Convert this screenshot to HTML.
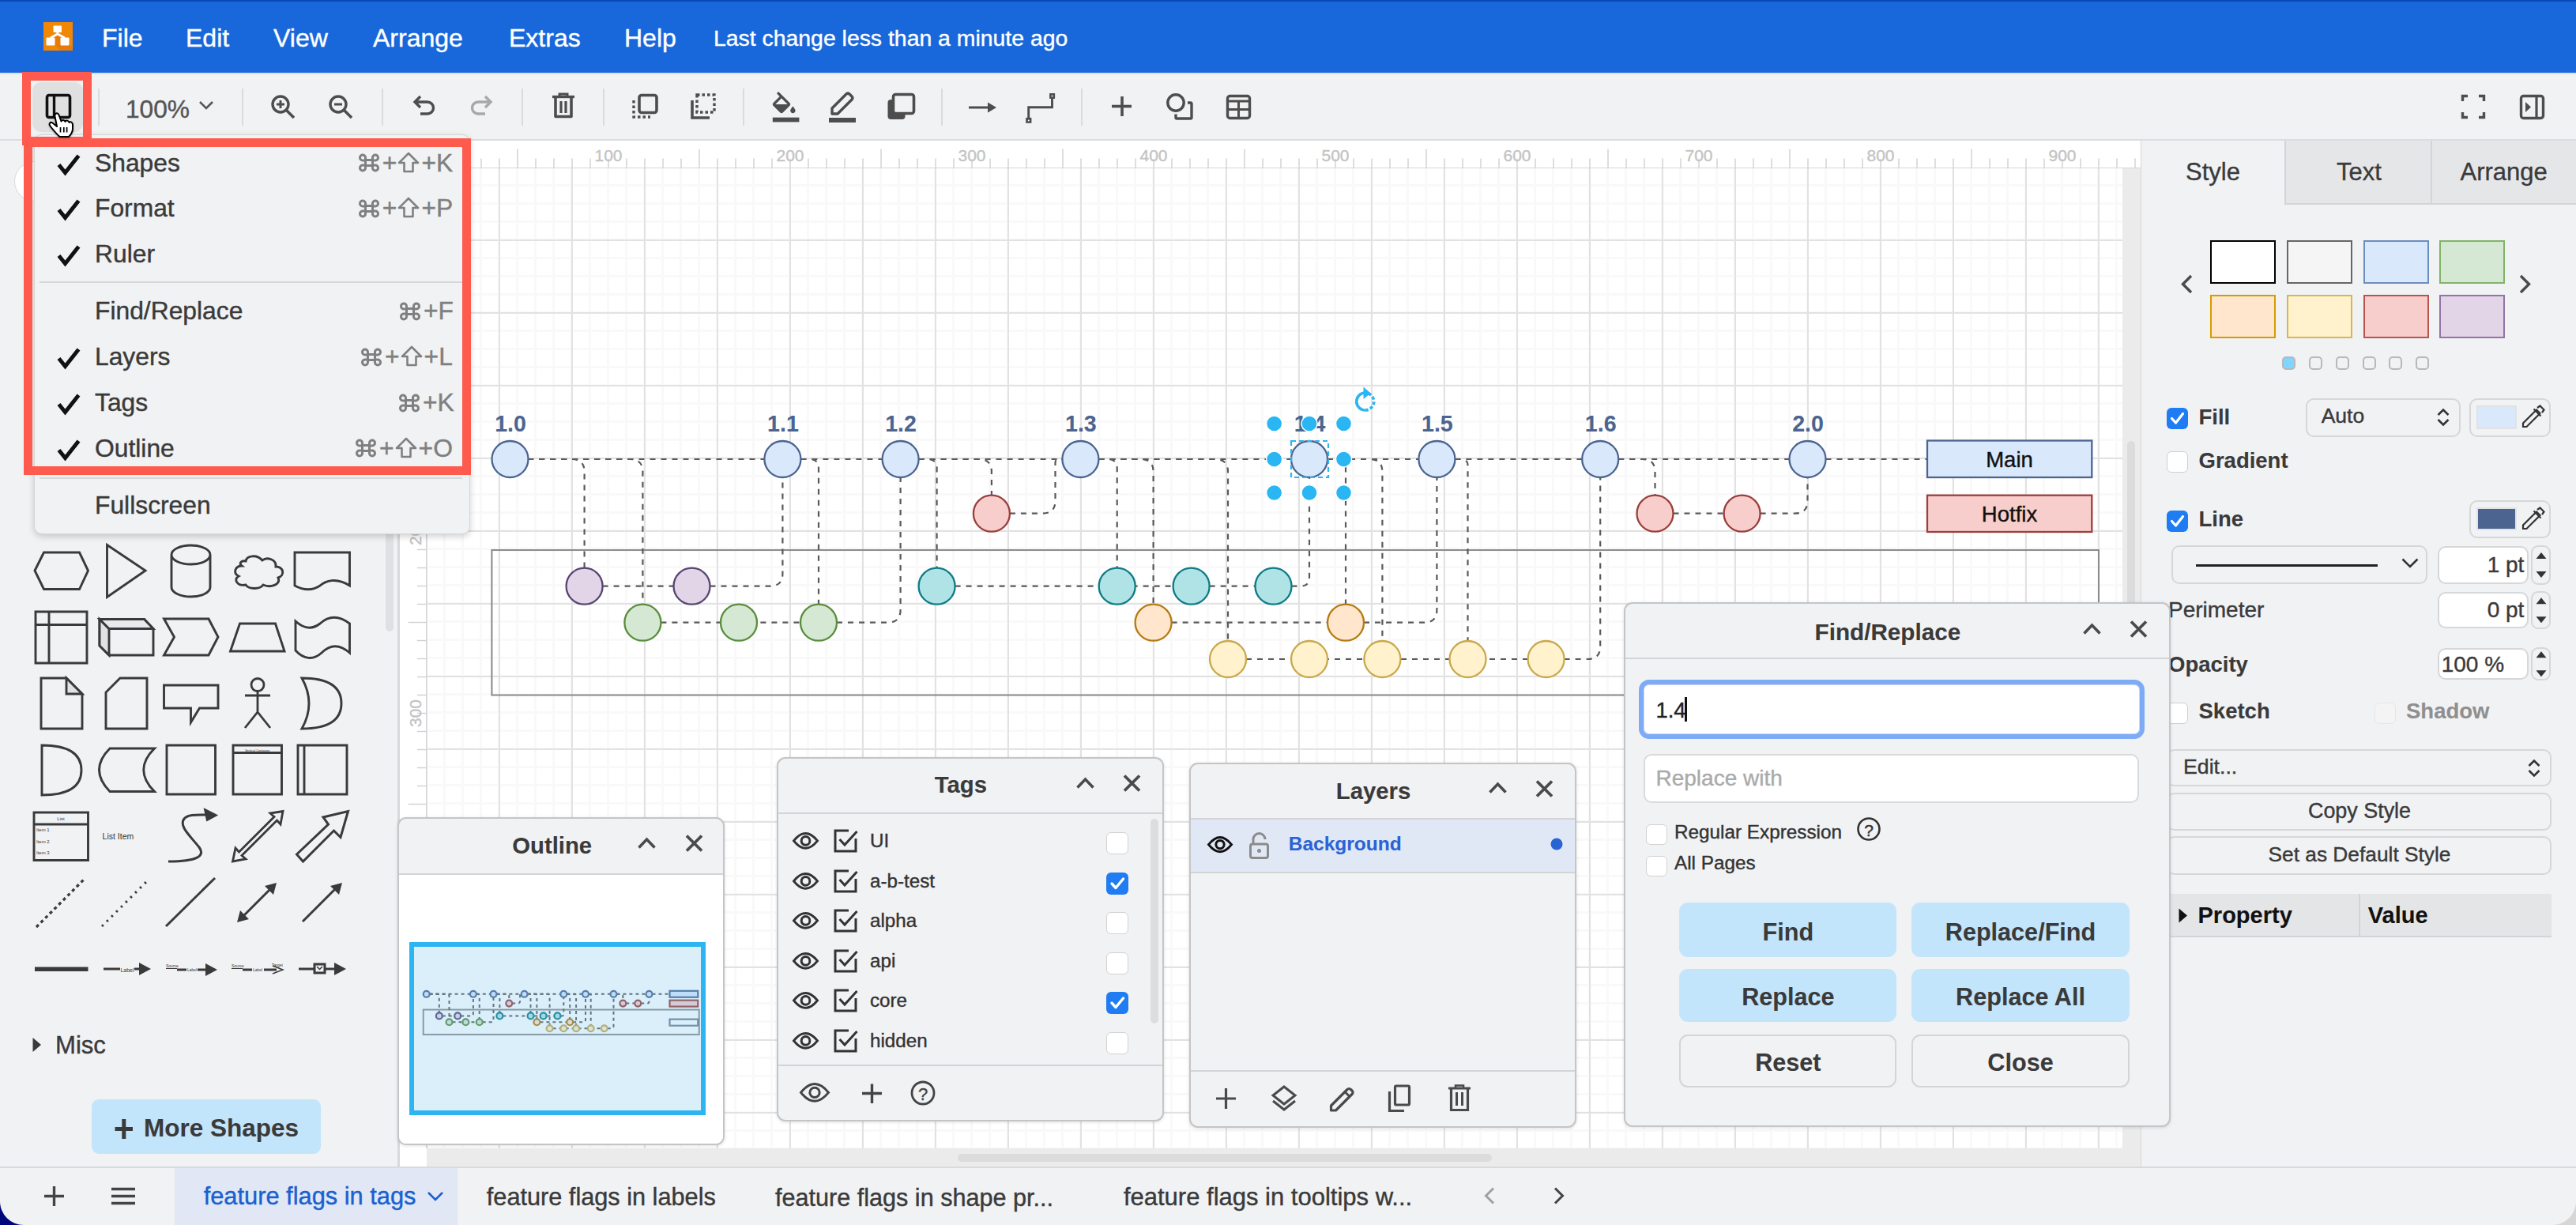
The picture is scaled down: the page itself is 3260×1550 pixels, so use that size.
<!DOCTYPE html>
<html><head><meta charset="utf-8">
<style>
html,body{margin:0;padding:0;}
body{width:3260px;height:1550px;position:relative;overflow:hidden;background:#f1f2f4;font-family:"Liberation Sans", sans-serif;}
.t{position:absolute;line-height:1;white-space:nowrap;-webkit-text-stroke:0.4px currentColor;}
.t.bd{-webkit-text-stroke:0.1px currentColor;}
.b{position:absolute;box-sizing:border-box;}
svg{position:absolute;overflow:visible;}
</style></head><body>
<div class="b" style="left:0.0px;top:0.0px;width:3260.0px;height:92.0px;background:#1868db;"></div>
<div class="b" style="left:0.0px;top:0.0px;width:3260.0px;height:2.0px;background:#0a48b8;"></div>
<svg style="left:55px;top:28px" width="37" height="36" viewBox="0 0 37 36">
<rect x="0" y="0" width="37" height="36" fill="#f08705"/>
<path d="M18 13 L37 32 L37 36 L22 36 L8 22 Z" fill="#e2700c" opacity="0.55"/>
<rect x="12.5" y="4.5" width="10.5" height="8.5" fill="#fff" rx="1"/>
<rect x="3.5" y="19.5" width="11" height="10" fill="#fff" rx="1"/>
<rect x="21.5" y="19.5" width="11" height="10" fill="#fff" rx="1"/>
<path d="M17.8 12 V15 L9 20 M17.8 15 L27 20" stroke="#fff" stroke-width="2.8" fill="none"/>
</svg>
<div class="t" style="left:129.0px;top:31.9px;font-size:32px;color:#fff;font-weight:normal;">File</div>
<div class="t" style="left:235.0px;top:31.9px;font-size:32px;color:#fff;font-weight:normal;">Edit</div>
<div class="t" style="left:346.0px;top:31.9px;font-size:32px;color:#fff;font-weight:normal;">View</div>
<div class="t" style="left:472.0px;top:31.9px;font-size:32px;color:#fff;font-weight:normal;">Arrange</div>
<div class="t" style="left:644.0px;top:31.9px;font-size:32px;color:#fff;font-weight:normal;">Extras</div>
<div class="t" style="left:790.0px;top:31.9px;font-size:32px;color:#fff;font-weight:normal;">Help</div>
<div class="t" style="left:903.0px;top:34.0px;font-size:28.4px;color:#fff;font-weight:normal;">Last change less than a minute ago</div>
<div class="b" style="left:0.0px;top:92.0px;width:3260.0px;height:85.0px;background:#f1f2f4;"></div>
<div class="b" style="left:0.0px;top:92.0px;width:3260.0px;height:2.0px;background:#dfdedb;"></div>
<div class="b" style="left:0.0px;top:176.0px;width:3260.0px;height:2.0px;background:#dcdde0;"></div>
<div class="b" style="left:0.0px;top:178.0px;width:505.0px;height:1298.0px;background:#f1f2f4;"></div>
<div class="b" style="left:503.0px;top:178.0px;width:2.0px;height:1298.0px;background:#dcdde0;"></div>
<div class="b" style="left:505.0px;top:178.0px;width:2204.0px;height:1298.0px;background:#fff;"></div>
<div class="b" style="left:2709.0px;top:178.0px;width:551.0px;height:1298.0px;background:#f1f2f4;"></div>
<div class="b" style="left:2708.0px;top:178.0px;width:2.0px;height:1298.0px;background:#d6d7da;"></div>
<div class="b" style="left:0.0px;top:1476.0px;width:3260.0px;height:74.0px;background:#f1f2f4;"></div>
<div class="b" style="left:0.0px;top:1476.0px;width:3260.0px;height:2.0px;background:#d8dadd;"></div>
<div class="b" style="left:41.0px;top:104.0px;width:64.0px;height:63.0px;background:#e0e0e0;border-radius:11px;"></div>
<svg style="left:55px;top:115px" width="40" height="40" viewBox="0 0 40 40"><rect x="4.5" y="5.5" width="29" height="28" rx="2.5" fill="none" stroke="#111" stroke-width="3.6"/><line x1="13.5" y1="6" x2="13.5" y2="33" stroke="#111" stroke-width="3.4"/></svg>
<div class="b" style="left:124.0px;top:112.0px;width:2.0px;height:47.0px;background:#dadbdd;"></div>
<div class="b" style="left:306.0px;top:112.0px;width:2.0px;height:47.0px;background:#dadbdd;"></div>
<div class="b" style="left:483.0px;top:112.0px;width:2.0px;height:47.0px;background:#dadbdd;"></div>
<div class="b" style="left:660.0px;top:112.0px;width:2.0px;height:47.0px;background:#dadbdd;"></div>
<div class="b" style="left:763.0px;top:112.0px;width:2.0px;height:47.0px;background:#dadbdd;"></div>
<div class="b" style="left:940.0px;top:112.0px;width:2.0px;height:47.0px;background:#dadbdd;"></div>
<div class="b" style="left:1191.0px;top:112.0px;width:2.0px;height:47.0px;background:#dadbdd;"></div>
<div class="b" style="left:1368.0px;top:112.0px;width:2.0px;height:47.0px;background:#dadbdd;"></div>
<div class="t" style="left:159.0px;top:123.2px;font-size:31.7px;color:#555;font-weight:normal;">100%</div>
<svg style="left:248px;top:124px" width="26" height="20" viewBox="0 0 26 20"><path d="M5 5 L13 13 L21 5" fill="none" stroke="#555" stroke-width="2.6"/></svg>
<svg style="left:341px;top:118px" width="34" height="34" viewBox="0 0 34 34"><circle cx="14" cy="14" r="10" fill="none" stroke="#4d4d4d" stroke-width="3.4"/><line x1="21.5" y1="21.5" x2="31" y2="31" stroke="#4d4d4d" stroke-width="3.6"/><line x1="9" y1="14" x2="19" y2="14" stroke="#4d4d4d" stroke-width="3"/><line x1="14" y1="9" x2="14" y2="19" stroke="#4d4d4d" stroke-width="3"/></svg>
<svg style="left:414px;top:118px" width="34" height="34" viewBox="0 0 34 34"><circle cx="14" cy="14" r="10" fill="none" stroke="#4d4d4d" stroke-width="3.4"/><line x1="21.5" y1="21.5" x2="31" y2="31" stroke="#4d4d4d" stroke-width="3.6"/><line x1="9" y1="14" x2="19" y2="14" stroke="#4d4d4d" stroke-width="3"/></svg>
<svg style="left:520px;top:118px" width="34" height="34" viewBox="0 0 34 34"><path d="M6 11 H21 A7.5 7.5 0 0 1 21 26 H12" fill="none" stroke="#4d4d4d" stroke-width="3.4"/><path d="M12 4 L5 11 L12 18" fill="none" stroke="#4d4d4d" stroke-width="3.4"/></svg>
<svg style="left:592px;top:118px" width="34" height="34" viewBox="0 0 34 34"><g transform="translate(34,0) scale(-1,1)"><path d="M6 11 H21 A7.5 7.5 0 0 1 21 26 H12" fill="none" stroke="#a8a8a8" stroke-width="3.4"/><path d="M12 4 L5 11 L12 18" fill="none" stroke="#a8a8a8" stroke-width="3.4"/></g></svg>
<svg style="left:696px;top:116px" width="34" height="36" viewBox="0 0 34 36"><path d="M3 6.5 H31" stroke="#4d4d4d" stroke-width="3.4"/><path d="M12 6 V3 H22 V6" fill="none" stroke="#4d4d4d" stroke-width="3"/><path d="M7 8 V31.5 H27 V8" fill="none" stroke="#4d4d4d" stroke-width="3.6" stroke-linejoin="round"/><line x1="14" y1="12" x2="14" y2="27" stroke="#4d4d4d" stroke-width="3.2"/><line x1="20" y1="12" x2="20" y2="27" stroke="#4d4d4d" stroke-width="3.2"/></svg>
<svg style="left:798px;top:117px" width="36" height="36" viewBox="0 0 36 36"><rect x="11" y="3.5" width="22" height="22" rx="3" fill="none" stroke="#4d4d4d" stroke-width="3.6"/><path d="M4 10 V31 H25" fill="none" stroke="#4d4d4d" stroke-width="3.4" stroke-dasharray="3.5 3"/></svg>
<svg style="left:872px;top:117px" width="36" height="36" viewBox="0 0 36 36"><path d="M10 3 H32 V25 H10 Z" fill="none" stroke="#4d4d4d" stroke-width="3.4" stroke-dasharray="3.5 3"/><path d="M4 10 V32 H26" fill="none" stroke="#4d4d4d" stroke-width="3.6"/></svg>
<svg style="left:973px;top:116px" width="40" height="40" viewBox="0 0 40 40"><g transform="scale(1.6)"><path d="M16.56 8.94L7.62 0 6.21 1.41l2.38 2.38-5.15 5.15c-.59.59-.59 1.54 0 2.12l5.5 5.5c.29.29.68.44 1.06.44s.77-.15 1.06-.44l5.5-5.5c.59-.58.59-1.53 0-2.12zM5.21 10L10 5.21 14.79 10H5.21zM19 11.5s-2 2.17-2 3.5c0 1.1.9 2 2 2s2-.9 2-2c0-1.33-2-3.5-2-3.5z" fill="#4d4d4d"/><rect x="3" y="20.4" width="21" height="3.6" fill="#4d4d4d"/></g></svg>
<svg style="left:1047px;top:113px" width="40" height="42" viewBox="0 0 40 42"><path d="M6 30 L6 24 L24 6 A3 3 0 0 1 28 6 L31 9 A3 3 0 0 1 31 13 L13 31 L6 31 Z" fill="none" stroke="#4d4d4d" stroke-width="3.4" stroke-linejoin="round"/><rect x="2" y="36" width="34" height="6" fill="#4d4d4d"/></svg>
<svg style="left:1120px;top:116px" width="40" height="40" viewBox="0 0 40 40"><rect x="3.5" y="10" width="22" height="25" rx="4" fill="#4d4d4d"/><rect x="10.5" y="3.5" width="26" height="24" rx="3" fill="#f1f2f4" stroke="#4d4d4d" stroke-width="3.6"/></svg>
<svg style="left:1224px;top:126px" width="40" height="20" viewBox="0 0 40 20"><line x1="2" y1="10" x2="28" y2="10" stroke="#4d4d4d" stroke-width="3"/><path d="M26 3.5 L37 10 L26 16.5 Z" fill="#4d4d4d"/></svg>
<svg style="left:1290px;top:110px" width="50" height="50" viewBox="0 0 50 50"><path d="M11.7 39 V25.7 H41.5 V14" fill="none" stroke="#4d4d4d" stroke-width="2.9"/><rect x="8.2" y="38.9" width="7.2" height="6.9" fill="#4d4d4d"/><rect x="38.1" y="8" width="7" height="6.9" fill="#4d4d4d"/><circle cx="11.8" cy="42.4" r="1" fill="#fff"/><circle cx="41.6" cy="11.5" r="1" fill="#fff"/></svg>
<svg style="left:1404px;top:119px" width="32" height="32" viewBox="0 0 32 32"><line x1="16" y1="3" x2="16" y2="28" stroke="#4d4d4d" stroke-width="3.6"/><line x1="3" y1="15.5" x2="28" y2="15.5" stroke="#4d4d4d" stroke-width="3.6"/></svg>
<svg style="left:1474px;top:116px" width="40" height="40" viewBox="0 0 40 40"><circle cx="14" cy="14" r="10.2" fill="none" stroke="#4d4d4d" stroke-width="3.4"/><path d="M14 28.5 V32.5 A1.5 1.5 0 0 0 15.5 34 H32.5 A1.5 1.5 0 0 0 34 32.5 V15.5 A1.5 1.5 0 0 0 32.5 14 H29" fill="none" stroke="#4d4d4d" stroke-width="3.4"/></svg>
<svg style="left:1550px;top:118px" width="36" height="36" viewBox="0 0 36 36"><rect x="3.5" y="3.5" width="28" height="28" rx="3" fill="none" stroke="#4d4d4d" stroke-width="3.4"/><line x1="3.5" y1="10" x2="31.5" y2="10" stroke="#4d4d4d" stroke-width="3"/><line x1="3.5" y1="20.5" x2="31.5" y2="20.5" stroke="#4d4d4d" stroke-width="3"/><line x1="17.5" y1="10" x2="17.5" y2="31" stroke="#4d4d4d" stroke-width="3"/></svg>
<svg style="left:3112px;top:117px" width="36" height="36" viewBox="0 0 36 36"><path d="M4.5 11 V4.5 H11 M25 4.5 H31.5 V11 M31.5 25 V31.5 H25 M11 31.5 H4.5 V25" fill="none" stroke="#4d4d4d" stroke-width="3.4"/></svg>
<svg style="left:3186px;top:117px" width="36" height="36" viewBox="0 0 36 36"><rect x="4.5" y="4.5" width="28" height="28" rx="3" fill="none" stroke="#4d4d4d" stroke-width="3.4"/><line x1="24" y1="5" x2="24" y2="32" stroke="#4d4d4d" stroke-width="3.2"/><path d="M10 12 L17 18.5 L10 25 Z" fill="#4d4d4d"/></svg>
<div class="b" style="left:540px;top:212px;width:2146px;height:1241px;background-color:#fff;background-image:linear-gradient(to right,#e2e2e2 0,#e2e2e2 2px,transparent 2px),linear-gradient(to bottom,#e2e2e2 0,#e2e2e2 2px,transparent 2px),linear-gradient(to right,#f9f9f9 0,#f9f9f9 3px,transparent 3px),linear-gradient(to bottom,#f9f9f9 0,#f9f9f9 3px,transparent 3px);background-size:92px 92px,92px 92px,23px 23px,23px 23px;background-position:-1px -1px,-1px -1px,-2px -2px,-2px -2px;"></div>
<div class="b" style="left:505.0px;top:178.0px;width:2204.0px;height:34.0px;background:#fff;"></div>
<div class="b" style="left:505.0px;top:212.0px;width:2204.0px;height:1.2px;background:#d3d5da;"></div>
<div class="b" style="left:505.0px;top:213.0px;width:34.0px;height:1240.0px;background:#fff;"></div>
<div class="b" style="left:503.0px;top:178.0px;width:2.5px;height:1298.0px;background:#d8d9dc;"></div>
<div class="b" style="left:538.8px;top:213.0px;width:1.2px;height:1240.0px;background:#d3d5da;"></div>
<svg style="left:0;top:0" width="3260" height="1550"><g stroke="#d0d0d0" stroke-width="1.4"><line x1="540" y1="188.5" x2="540" y2="212" /><line x1="563" y1="200.5" x2="563" y2="212" /><line x1="586" y1="200.5" x2="586" y2="212" /><line x1="609" y1="200.5" x2="609" y2="212" /><line x1="632" y1="200.5" x2="632" y2="212" /><line x1="655" y1="188.5" x2="655" y2="212" /><line x1="678" y1="200.5" x2="678" y2="212" /><line x1="701" y1="200.5" x2="701" y2="212" /><line x1="724" y1="200.5" x2="724" y2="212" /><line x1="747" y1="200.5" x2="747" y2="212" /><line x1="770" y1="201" x2="770" y2="212" /><line x1="793" y1="200.5" x2="793" y2="212" /><line x1="816" y1="200.5" x2="816" y2="212" /><line x1="839" y1="200.5" x2="839" y2="212" /><line x1="862" y1="200.5" x2="862" y2="212" /><line x1="885" y1="188.5" x2="885" y2="212" /><line x1="908" y1="200.5" x2="908" y2="212" /><line x1="931" y1="200.5" x2="931" y2="212" /><line x1="954" y1="200.5" x2="954" y2="212" /><line x1="977" y1="200.5" x2="977" y2="212" /><line x1="1000" y1="201" x2="1000" y2="212" /><line x1="1023" y1="200.5" x2="1023" y2="212" /><line x1="1046" y1="200.5" x2="1046" y2="212" /><line x1="1069" y1="200.5" x2="1069" y2="212" /><line x1="1092" y1="200.5" x2="1092" y2="212" /><line x1="1115" y1="188.5" x2="1115" y2="212" /><line x1="1138" y1="200.5" x2="1138" y2="212" /><line x1="1161" y1="200.5" x2="1161" y2="212" /><line x1="1184" y1="200.5" x2="1184" y2="212" /><line x1="1207" y1="200.5" x2="1207" y2="212" /><line x1="1230" y1="201" x2="1230" y2="212" /><line x1="1253" y1="200.5" x2="1253" y2="212" /><line x1="1276" y1="200.5" x2="1276" y2="212" /><line x1="1299" y1="200.5" x2="1299" y2="212" /><line x1="1322" y1="200.5" x2="1322" y2="212" /><line x1="1345" y1="188.5" x2="1345" y2="212" /><line x1="1368" y1="200.5" x2="1368" y2="212" /><line x1="1391" y1="200.5" x2="1391" y2="212" /><line x1="1414" y1="200.5" x2="1414" y2="212" /><line x1="1437" y1="200.5" x2="1437" y2="212" /><line x1="1460" y1="201" x2="1460" y2="212" /><line x1="1483" y1="200.5" x2="1483" y2="212" /><line x1="1506" y1="200.5" x2="1506" y2="212" /><line x1="1529" y1="200.5" x2="1529" y2="212" /><line x1="1552" y1="200.5" x2="1552" y2="212" /><line x1="1575" y1="188.5" x2="1575" y2="212" /><line x1="1598" y1="200.5" x2="1598" y2="212" /><line x1="1621" y1="200.5" x2="1621" y2="212" /><line x1="1644" y1="200.5" x2="1644" y2="212" /><line x1="1667" y1="200.5" x2="1667" y2="212" /><line x1="1690" y1="201" x2="1690" y2="212" /><line x1="1713" y1="200.5" x2="1713" y2="212" /><line x1="1736" y1="200.5" x2="1736" y2="212" /><line x1="1759" y1="200.5" x2="1759" y2="212" /><line x1="1782" y1="200.5" x2="1782" y2="212" /><line x1="1805" y1="188.5" x2="1805" y2="212" /><line x1="1828" y1="200.5" x2="1828" y2="212" /><line x1="1851" y1="200.5" x2="1851" y2="212" /><line x1="1874" y1="200.5" x2="1874" y2="212" /><line x1="1897" y1="200.5" x2="1897" y2="212" /><line x1="1920" y1="201" x2="1920" y2="212" /><line x1="1943" y1="200.5" x2="1943" y2="212" /><line x1="1966" y1="200.5" x2="1966" y2="212" /><line x1="1989" y1="200.5" x2="1989" y2="212" /><line x1="2012" y1="200.5" x2="2012" y2="212" /><line x1="2035" y1="188.5" x2="2035" y2="212" /><line x1="2058" y1="200.5" x2="2058" y2="212" /><line x1="2081" y1="200.5" x2="2081" y2="212" /><line x1="2104" y1="200.5" x2="2104" y2="212" /><line x1="2127" y1="200.5" x2="2127" y2="212" /><line x1="2150" y1="201" x2="2150" y2="212" /><line x1="2173" y1="200.5" x2="2173" y2="212" /><line x1="2196" y1="200.5" x2="2196" y2="212" /><line x1="2219" y1="200.5" x2="2219" y2="212" /><line x1="2242" y1="200.5" x2="2242" y2="212" /><line x1="2265" y1="188.5" x2="2265" y2="212" /><line x1="2288" y1="200.5" x2="2288" y2="212" /><line x1="2311" y1="200.5" x2="2311" y2="212" /><line x1="2334" y1="200.5" x2="2334" y2="212" /><line x1="2357" y1="200.5" x2="2357" y2="212" /><line x1="2380" y1="201" x2="2380" y2="212" /><line x1="2403" y1="200.5" x2="2403" y2="212" /><line x1="2426" y1="200.5" x2="2426" y2="212" /><line x1="2449" y1="200.5" x2="2449" y2="212" /><line x1="2472" y1="200.5" x2="2472" y2="212" /><line x1="2495" y1="188.5" x2="2495" y2="212" /><line x1="2518" y1="200.5" x2="2518" y2="212" /><line x1="2541" y1="200.5" x2="2541" y2="212" /><line x1="2564" y1="200.5" x2="2564" y2="212" /><line x1="2587" y1="200.5" x2="2587" y2="212" /><line x1="2610" y1="201" x2="2610" y2="212" /><line x1="2633" y1="200.5" x2="2633" y2="212" /><line x1="2656" y1="200.5" x2="2656" y2="212" /><line x1="2679" y1="200.5" x2="2679" y2="212" /><line x1="2702" y1="200.5" x2="2702" y2="212" /><line x1="516.5" y1="212.5" x2="539" y2="212.5" /><line x1="528" y1="235.5" x2="539" y2="235.5" /><line x1="528" y1="258.5" x2="539" y2="258.5" /><line x1="528" y1="281.5" x2="539" y2="281.5" /><line x1="528" y1="304.5" x2="539" y2="304.5" /><line x1="516.5" y1="327.5" x2="539" y2="327.5" /><line x1="528" y1="350.5" x2="539" y2="350.5" /><line x1="528" y1="373.5" x2="539" y2="373.5" /><line x1="528" y1="396.5" x2="539" y2="396.5" /><line x1="528" y1="419.5" x2="539" y2="419.5" /><line x1="528" y1="442.5" x2="539" y2="442.5" /><line x1="528" y1="465.5" x2="539" y2="465.5" /><line x1="528" y1="488.5" x2="539" y2="488.5" /><line x1="528" y1="511.5" x2="539" y2="511.5" /><line x1="528" y1="534.5" x2="539" y2="534.5" /><line x1="516.5" y1="557.5" x2="539" y2="557.5" /><line x1="528" y1="580.5" x2="539" y2="580.5" /><line x1="528" y1="603.5" x2="539" y2="603.5" /><line x1="528" y1="626.5" x2="539" y2="626.5" /><line x1="528" y1="649.5" x2="539" y2="649.5" /><line x1="528" y1="672.5" x2="539" y2="672.5" /><line x1="528" y1="695.5" x2="539" y2="695.5" /><line x1="528" y1="718.5" x2="539" y2="718.5" /><line x1="528" y1="741.5" x2="539" y2="741.5" /><line x1="528" y1="764.5" x2="539" y2="764.5" /><line x1="516.5" y1="787.5" x2="539" y2="787.5" /><line x1="528" y1="810.5" x2="539" y2="810.5" /><line x1="528" y1="833.5" x2="539" y2="833.5" /><line x1="528" y1="856.5" x2="539" y2="856.5" /><line x1="528" y1="879.5" x2="539" y2="879.5" /><line x1="528" y1="902.5" x2="539" y2="902.5" /><line x1="528" y1="925.5" x2="539" y2="925.5" /><line x1="528" y1="948.5" x2="539" y2="948.5" /><line x1="528" y1="971.5" x2="539" y2="971.5" /><line x1="528" y1="994.5" x2="539" y2="994.5" /><line x1="516.5" y1="1017.5" x2="539" y2="1017.5" /><line x1="528" y1="1040.5" x2="539" y2="1040.5" /><line x1="528" y1="1063.5" x2="539" y2="1063.5" /><line x1="528" y1="1086.5" x2="539" y2="1086.5" /><line x1="528" y1="1109.5" x2="539" y2="1109.5" /><line x1="528" y1="1132.5" x2="539" y2="1132.5" /><line x1="528" y1="1155.5" x2="539" y2="1155.5" /><line x1="528" y1="1178.5" x2="539" y2="1178.5" /><line x1="528" y1="1201.5" x2="539" y2="1201.5" /><line x1="528" y1="1224.5" x2="539" y2="1224.5" /><line x1="516.5" y1="1247.5" x2="539" y2="1247.5" /><line x1="528" y1="1270.5" x2="539" y2="1270.5" /><line x1="528" y1="1293.5" x2="539" y2="1293.5" /><line x1="528" y1="1316.5" x2="539" y2="1316.5" /><line x1="528" y1="1339.5" x2="539" y2="1339.5" /><line x1="528" y1="1362.5" x2="539" y2="1362.5" /><line x1="528" y1="1385.5" x2="539" y2="1385.5" /><line x1="528" y1="1408.5" x2="539" y2="1408.5" /><line x1="528" y1="1431.5" x2="539" y2="1431.5" /></g></svg>
<div class="t" style="left:-230.0px;width:2000px;text-align:center;top:185.7px;font-size:21px;color:#c4c4c4;font-weight:normal;">100</div><div class="t" style="left:0.0px;width:2000px;text-align:center;top:185.7px;font-size:21px;color:#c4c4c4;font-weight:normal;">200</div><div class="t" style="left:230.0px;width:2000px;text-align:center;top:185.7px;font-size:21px;color:#c4c4c4;font-weight:normal;">300</div><div class="t" style="left:460.0px;width:2000px;text-align:center;top:185.7px;font-size:21px;color:#c4c4c4;font-weight:normal;">400</div><div class="t" style="left:690.0px;width:2000px;text-align:center;top:185.7px;font-size:21px;color:#c4c4c4;font-weight:normal;">500</div><div class="t" style="left:920.0px;width:2000px;text-align:center;top:185.7px;font-size:21px;color:#c4c4c4;font-weight:normal;">600</div><div class="t" style="left:1150.0px;width:2000px;text-align:center;top:185.7px;font-size:21px;color:#c4c4c4;font-weight:normal;">700</div><div class="t" style="left:1380.0px;width:2000px;text-align:center;top:185.7px;font-size:21px;color:#c4c4c4;font-weight:normal;">800</div><div class="t" style="left:1610.0px;width:2000px;text-align:center;top:185.7px;font-size:21px;color:#c4c4c4;font-weight:normal;">900</div><div class="t" style="left:484.5px;top:432.0px;width:80px;height:21px;text-align:center;font-size:21px;color:#c4c4c4;transform:rotate(-90deg);">100</div><div class="t" style="left:484.5px;top:662.0px;width:80px;height:21px;text-align:center;font-size:21px;color:#c4c4c4;transform:rotate(-90deg);">200</div><div class="t" style="left:484.5px;top:892.0px;width:80px;height:21px;text-align:center;font-size:21px;color:#c4c4c4;transform:rotate(-90deg);">300</div><div class="t" style="left:484.5px;top:1122.0px;width:80px;height:21px;text-align:center;font-size:21px;color:#c4c4c4;transform:rotate(-90deg);">400</div><div class="t" style="left:484.5px;top:1352.0px;width:80px;height:21px;text-align:center;font-size:21px;color:#c4c4c4;transform:rotate(-90deg);">500</div>
<div class="b" style="left:2686.0px;top:213.0px;width:23.0px;height:1263.0px;background:#ebebeb;"></div>
<div class="b" style="left:2692.0px;top:558.0px;width:10.0px;height:842.0px;background:#dcdcdc;border-radius:5px;"></div>
<div class="b" style="left:540.0px;top:1453.0px;width:2146.0px;height:23.0px;background:#ebebeb;"></div>
<div class="b" style="left:1212.0px;top:1459.7px;width:676.0px;height:10.3px;background:#dcdcdc;border-radius:5px;"></div>
<svg style="left:0;top:0" width="3260" height="1550"><rect x="622.40" y="696.00" width="2033.60" height="183.50" fill="none" stroke="#8c8c8c" stroke-width="2.07"/><path d="M668.5,581.0 L967.4,581.0" fill="none" stroke="#595959" stroke-width="2.2" stroke-dasharray="7 7"/><path d="M1013.4,581.0 L1116.6,581.0" fill="none" stroke="#595959" stroke-width="2.2" stroke-dasharray="7 7"/><path d="M1162.6,581.0 L1344.4,581.0" fill="none" stroke="#595959" stroke-width="2.2" stroke-dasharray="7 7"/><path d="M1390.4,581.0 L1634.0,581.0" fill="none" stroke="#595959" stroke-width="2.2" stroke-dasharray="7 7"/><path d="M1680.0,581.0 L1795.4,581.0" fill="none" stroke="#595959" stroke-width="2.2" stroke-dasharray="7 7"/><path d="M1841.4,581.0 L2002.2,581.0" fill="none" stroke="#595959" stroke-width="2.2" stroke-dasharray="7 7"/><path d="M2048.2,581.0 L2264.5,581.0" fill="none" stroke="#595959" stroke-width="2.2" stroke-dasharray="7 7"/><path d="M2310.5,581.0 L2439.0,581.0" fill="none" stroke="#595959" stroke-width="2.2" stroke-dasharray="7 7"/><path d="M668.0,581.0 L723.6,581.0 Q739.6,581.0 739.6,597.0 L739.6,718.7" fill="none" stroke="#595959" stroke-width="2.2" stroke-dasharray="7 7"/><path d="M668.0,581.0 L797.4,581.0 Q813.4,581.0 813.4,597.0 L813.4,764.7" fill="none" stroke="#595959" stroke-width="2.2" stroke-dasharray="7 7"/><path d="M762.6,741.7 L852.5,741.7" fill="none" stroke="#595959" stroke-width="2.2" stroke-dasharray="7 7"/><path d="M898.5,741.7 L974.4,741.7 Q990.4,741.7 990.4,725.7 L990.4,604.0" fill="none" stroke="#595959" stroke-width="2.2" stroke-dasharray="7 7"/><path d="M1013.4,581.0 L1024.7,581.0 Q1036.0,581.0 1036.0,592.3 L1036.0,764.7" fill="none" stroke="#595959" stroke-width="2.2" stroke-dasharray="7 7"/><path d="M836.4,787.7 L1013.0,787.7" fill="none" stroke="#595959" stroke-width="2.2" stroke-dasharray="7 7"/><path d="M1059.0,787.7 L1123.6,787.7 Q1139.6,787.7 1139.6,771.7 L1139.6,604.0" fill="none" stroke="#595959" stroke-width="2.2" stroke-dasharray="7 7"/><path d="M1162.6,581.0 L1174.1,581.0 Q1185.6,581.0 1185.6,592.5 L1185.6,718.7" fill="none" stroke="#595959" stroke-width="2.2" stroke-dasharray="7 7"/><path d="M1162.6,581.0 L1238.9,581.0 Q1254.9,581.0 1254.9,597.0 L1254.9,626.7" fill="none" stroke="#595959" stroke-width="2.2" stroke-dasharray="7 7"/><path d="M1277.9,649.7 L1319.5,649.7 Q1335.5,649.7 1335.5,633.7 L1335.5,585.5 Q1335.5,581.0 1340.0,581.0 L1344.4,581.0" fill="none" stroke="#595959" stroke-width="2.2" stroke-dasharray="7 7"/><path d="M1390.4,581.0 L1402.1,581.0 Q1413.7,581.0 1413.7,592.6 L1413.7,718.7" fill="none" stroke="#595959" stroke-width="2.2" stroke-dasharray="7 7"/><path d="M1390.4,581.0 L1443.6,581.0 Q1459.6,581.0 1459.6,597.0 L1459.6,764.7" fill="none" stroke="#595959" stroke-width="2.2" stroke-dasharray="7 7"/><path d="M1390.4,581.0 L1538.0,581.0 Q1554.0,581.0 1554.0,597.0 L1554.0,811.0" fill="none" stroke="#595959" stroke-width="2.2" stroke-dasharray="7 7"/><path d="M1208.6,741.7 L1588.5,741.7" fill="none" stroke="#595959" stroke-width="2.2" stroke-dasharray="7 7"/><path d="M1634.5,741.7 L1645.8,741.7 Q1657.0,741.7 1657.0,730.5 L1657.0,604.0" fill="none" stroke="#595959" stroke-width="2.2" stroke-dasharray="7 7"/><path d="M1680.0,581.0 L1691.5,581.0 Q1703.0,581.0 1703.0,592.5 L1703.0,764.7" fill="none" stroke="#595959" stroke-width="2.2" stroke-dasharray="7 7"/><path d="M1482.6,787.7 L1680.0,787.7" fill="none" stroke="#595959" stroke-width="2.2" stroke-dasharray="7 7"/><path d="M1726.0,787.7 L1802.4,787.7 Q1818.4,787.7 1818.4,771.7 L1818.4,604.0" fill="none" stroke="#595959" stroke-width="2.2" stroke-dasharray="7 7"/><path d="M1680.0,581.0 L1733.4,581.0 Q1749.4,581.0 1749.4,597.0 L1749.4,811.0" fill="none" stroke="#595959" stroke-width="2.2" stroke-dasharray="7 7"/><path d="M1577.0,834.0 L1933.6,834.0" fill="none" stroke="#595959" stroke-width="2.2" stroke-dasharray="7 7"/><path d="M1841.4,581.0 L1849.5,581.0 Q1857.5,581.0 1857.5,589.0 L1857.5,811.0" fill="none" stroke="#595959" stroke-width="2.2" stroke-dasharray="7 7"/><path d="M1979.6,834.0 L2009.2,834.0 Q2025.2,834.0 2025.2,818.0 L2025.2,604.0" fill="none" stroke="#595959" stroke-width="2.2" stroke-dasharray="7 7"/><path d="M2048.2,581.0 L2078.5,581.0 Q2094.5,581.0 2094.5,597.0 L2094.5,626.7" fill="none" stroke="#595959" stroke-width="2.2" stroke-dasharray="7 7"/><path d="M2117.5,649.7 L2181.6,649.7" fill="none" stroke="#595959" stroke-width="2.2" stroke-dasharray="7 7"/><path d="M2227.6,649.7 L2271.5,649.7 Q2287.5,649.7 2287.5,633.7 L2287.5,604.0" fill="none" stroke="#595959" stroke-width="2.2" stroke-dasharray="7 7"/><circle cx="645.50" cy="581.00" r="23.00" fill="#dae8fc" stroke="#4b6590" stroke-width="2.3"/><circle cx="990.40" cy="581.00" r="23.00" fill="#dae8fc" stroke="#4b6590" stroke-width="2.3"/><circle cx="1139.60" cy="581.00" r="23.00" fill="#dae8fc" stroke="#4b6590" stroke-width="2.3"/><circle cx="1367.40" cy="581.00" r="23.00" fill="#dae8fc" stroke="#4b6590" stroke-width="2.3"/><circle cx="1657.00" cy="581.00" r="23.00" fill="#dae8fc" stroke="#4b6590" stroke-width="2.3"/><circle cx="1818.40" cy="581.00" r="23.00" fill="#dae8fc" stroke="#4b6590" stroke-width="2.3"/><circle cx="2025.20" cy="581.00" r="23.00" fill="#dae8fc" stroke="#4b6590" stroke-width="2.3"/><circle cx="2287.50" cy="581.00" r="23.00" fill="#dae8fc" stroke="#4b6590" stroke-width="2.3"/><circle cx="739.60" cy="741.70" r="23.00" fill="#e1d5e7" stroke="#574572" stroke-width="2.3"/><circle cx="875.50" cy="741.70" r="23.00" fill="#e1d5e7" stroke="#574572" stroke-width="2.3"/><circle cx="813.40" cy="787.70" r="23.00" fill="#d5e8d4" stroke="#5a8d3b" stroke-width="2.3"/><circle cx="935.00" cy="787.70" r="23.00" fill="#d5e8d4" stroke="#5a8d3b" stroke-width="2.3"/><circle cx="1036.00" cy="787.70" r="23.00" fill="#d5e8d4" stroke="#5a8d3b" stroke-width="2.3"/><circle cx="1254.90" cy="649.70" r="23.00" fill="#f8cecc" stroke="#9a3f3c" stroke-width="2.3"/><circle cx="2094.50" cy="649.70" r="23.00" fill="#f8cecc" stroke="#9a3f3c" stroke-width="2.3"/><circle cx="2204.60" cy="649.70" r="23.00" fill="#f8cecc" stroke="#9a3f3c" stroke-width="2.3"/><circle cx="1185.60" cy="741.70" r="23.00" fill="#b0e3e6" stroke="#0e7c85" stroke-width="2.3"/><circle cx="1413.70" cy="741.70" r="23.00" fill="#b0e3e6" stroke="#0e7c85" stroke-width="2.3"/><circle cx="1507.60" cy="741.70" r="23.00" fill="#b0e3e6" stroke="#0e7c85" stroke-width="2.3"/><circle cx="1611.50" cy="741.70" r="23.00" fill="#b0e3e6" stroke="#0e7c85" stroke-width="2.3"/><circle cx="1459.60" cy="787.70" r="23.00" fill="#ffe6cc" stroke="#b67a10" stroke-width="2.3"/><circle cx="1703.00" cy="787.70" r="23.00" fill="#ffe6cc" stroke="#b67a10" stroke-width="2.3"/><circle cx="1554.00" cy="834.00" r="23.00" fill="#fff2cc" stroke="#c9a94c" stroke-width="2.3"/><circle cx="1657.00" cy="834.00" r="23.00" fill="#fff2cc" stroke="#c9a94c" stroke-width="2.3"/><circle cx="1749.40" cy="834.00" r="23.00" fill="#fff2cc" stroke="#c9a94c" stroke-width="2.3"/><circle cx="1857.50" cy="834.00" r="23.00" fill="#fff2cc" stroke="#c9a94c" stroke-width="2.3"/><circle cx="1956.60" cy="834.00" r="23.00" fill="#fff2cc" stroke="#c9a94c" stroke-width="2.3"/><rect x="2439.00" y="557.50" width="208.30" height="46.50" fill="#dae8fc" stroke="#4b6590" stroke-width="2.3"/><rect x="2439.00" y="626.70" width="208.30" height="46.30" fill="#f8cecc" stroke="#9a3f3c" stroke-width="2.3"/></svg>
<div class="t bd" style="left:-354.0px;width:2000px;text-align:center;top:521.8px;font-size:28.6px;color:#4b6590;font-weight:bold;">1.0</div>
<div class="t bd" style="left:-9.1px;width:2000px;text-align:center;top:521.8px;font-size:28.6px;color:#4b6590;font-weight:bold;">1.1</div>
<div class="t bd" style="left:140.1px;width:2000px;text-align:center;top:521.8px;font-size:28.6px;color:#4b6590;font-weight:bold;">1.2</div>
<div class="t bd" style="left:367.9px;width:2000px;text-align:center;top:521.8px;font-size:28.6px;color:#4b6590;font-weight:bold;">1.3</div>
<div class="t bd" style="left:657.5px;width:2000px;text-align:center;top:521.8px;font-size:28.6px;color:#4b6590;font-weight:bold;">1.4</div>
<div class="t bd" style="left:818.9px;width:2000px;text-align:center;top:521.8px;font-size:28.6px;color:#4b6590;font-weight:bold;">1.5</div>
<div class="t bd" style="left:1025.7px;width:2000px;text-align:center;top:521.8px;font-size:28.6px;color:#4b6590;font-weight:bold;">1.6</div>
<div class="t bd" style="left:1288.0px;width:2000px;text-align:center;top:521.8px;font-size:28.6px;color:#4b6590;font-weight:bold;">2.0</div>
<div class="t" style="left:1543.0px;width:2000px;text-align:center;top:567.7px;font-size:27.5px;color:#111;font-weight:normal;">Main</div>
<div class="t" style="left:1543.0px;width:2000px;text-align:center;top:636.7px;font-size:27.5px;color:#111;font-weight:normal;">Hotfix</div>
<svg style="left:0;top:0" width="3260" height="1550"><rect x="1634" y="558" width="47" height="46" fill="none" stroke="#29b6f2" stroke-width="2.2" stroke-dasharray="6 4"/><circle cx="1612.6" cy="536" r="10" fill="#29b6f2" stroke="#fff" stroke-width="1.4"/><circle cx="1612.6" cy="581" r="10" fill="#29b6f2" stroke="#fff" stroke-width="1.4"/><circle cx="1612.6" cy="623.5" r="10" fill="#29b6f2" stroke="#fff" stroke-width="1.4"/><circle cx="1657" cy="536" r="10" fill="#29b6f2" stroke="#fff" stroke-width="1.4"/><circle cx="1657" cy="623.5" r="10" fill="#29b6f2" stroke="#fff" stroke-width="1.4"/><circle cx="1700.5" cy="536" r="10" fill="#29b6f2" stroke="#fff" stroke-width="1.4"/><circle cx="1700.5" cy="581" r="10" fill="#29b6f2" stroke="#fff" stroke-width="1.4"/><circle cx="1700.5" cy="623.5" r="10" fill="#29b6f2" stroke="#fff" stroke-width="1.4"/><path d="M1727.7 497 A11 11 0 0 0 1727.7 519" fill="none" stroke="#29b6f2" stroke-width="3.6"/><path d="M1727.7 519 A11 11 0 0 0 1738.7 508 A11 11 0 0 0 1732 498" fill="none" stroke="#29b6f2" stroke-width="3.6" stroke-dasharray="4 2.5"/><path d="M1725.5 489.5 L1734.5 497.5 L1725.5 505 Z" fill="#29b6f2"/></svg>
<div class="b" style="left:18.0px;top:204.0px;width:472.0px;height:51.0px;background:#fff;border:1.5px solid #d9d9d9;border-radius:26px;"></div>
<div class="b" style="left:488.0px;top:650.0px;width:10.0px;height:149.0px;background:#dfe0e2;border-radius:5px;"></div>
<svg style="left:0;top:0" width="520" height="1550"><path d="M55.5,699 L100.5,699 L111.5,722 L100.5,745.5 L55.5,745.5 L44,722 Z" fill="none" stroke="#3a3a3a" stroke-width="2.9" stroke-linejoin="miter" /><path d="M135.5,689.5 L184,722 L135.5,755.5 Z" fill="none" stroke="#3a3a3a" stroke-width="2.9" stroke-linejoin="miter" /><path d="M217,702 L217,743 A24.5,12 0 0 0 266,743 L266,702 A24.5,12 0 0 0 217,702 A24.5,12 0 0 0 266,702" fill="none" stroke="#3a3a3a" stroke-width="2.9" stroke-linejoin="miter" /><path d="M306,716 C298,716 294,725 302,729 C295,733 300,742 311,740 C315,746 329,746 333,740 C342,744 356,740 352,731 C361,728 359,717 349,717 C350,708 338,704 332,709 C325,701 312,703 311,710 C305,709 302,713 306,716 Z" fill="none" stroke="#3a3a3a" stroke-width="2.9" stroke-linejoin="miter" /><path d="M373,699 L442.5,699 L442.5,741 C425,730 412,735 405,741 C396,747 386,748 373,741 Z" fill="none" stroke="#3a3a3a" stroke-width="2.9" stroke-linejoin="miter" /><path d="M45,774 H110 V839 H45 Z M62,774 V839 M45,790.5 H110" fill="none" stroke="#3a3a3a" stroke-width="2.9" stroke-linejoin="miter" /><path d="M126,783.5 L182.5,783.5 L194,795.5 L194,829 L138,829 L126,817 Z" fill="none" stroke="#3a3a3a" stroke-width="2.9" stroke-linejoin="miter" /><path d="M126,783.5 L138,795.5 L138,829 L126,817 Z" fill="#dfe3e6" stroke="#3a3a3a" stroke-width="2.9"/><path d="M126,783.5 L182.5,783.5 L194,795.5 L138,795.5 Z" fill="#e8ebed" stroke="#3a3a3a" stroke-width="2.9"/><path d="M207.5,783 L264,783 L276,806 L264,829 L207.5,829 L220.5,806 Z" fill="none" stroke="#3a3a3a" stroke-width="2.9" stroke-linejoin="miter" /><path d="M303.5,789 L348.5,789 L360,824 L291.5,824 Z" fill="none" stroke="#3a3a3a" stroke-width="2.9" stroke-linejoin="miter" /><path d="M374,786 C386,797 396,796 405,789 C416,779 428,778 442.5,789 L442.5,826 C430,815 418,815 407,826 C396,836 384,834 374,823 Z" fill="none" stroke="#3a3a3a" stroke-width="2.9" stroke-linejoin="miter" /><path d="M52,858 L84,858 L104,878 L104,922 L52,922 Z" fill="none" stroke="#3a3a3a" stroke-width="2.9" stroke-linejoin="miter" /><path d="M84,858 L84,878 L104,878 Z" fill="#dfe3e6" stroke="#3a3a3a" stroke-width="2.9"/><path d="M152,858 L186,858 L186,922 L134,922 L134,876 Z" fill="none" stroke="#3a3a3a" stroke-width="2.9" stroke-linejoin="miter" /><path d="M207.5,867 L276,867 L276,896 L252.5,896 L241.5,914 L241.5,896 L207.5,896 Z" fill="none" stroke="#3a3a3a" stroke-width="2.9" stroke-linejoin="miter" /><g stroke="#3a3a3a" stroke-width="2.8" fill="none"><circle cx="326" cy="866.5" r="8"/><path d="M326,874.5 V901 M310,880 H342 M310,921 L326,901 L342,921"/></g><path d="M382,858 Q432,858 432,890 Q432,922 382,922 Q400,890 382,858 Z" fill="none" stroke="#3a3a3a" stroke-width="2.9" stroke-linejoin="miter" /><path d="M53,943 Q103,943 103,974.5 Q103,1006 53,1006 Z" fill="none" stroke="#3a3a3a" stroke-width="2.9" stroke-linejoin="miter" /><path d="M139,947 L195.5,947 Q168,974 195.5,1001.5 L139,1001.5 Q112,974 139,947 Z" fill="none" stroke="#3a3a3a" stroke-width="2.9" stroke-linejoin="miter" /><path d="M211,943 H272.5 V1005 H211 Z" fill="none" stroke="#3a3a3a" stroke-width="2.9" stroke-linejoin="miter" /><path d="M295,943 H356.5 V1005 H295 Z M295,952.5 H356.5" fill="none" stroke="#3a3a3a" stroke-width="2.9" stroke-linejoin="miter" /><text x="325.7" y="950.5" font-size="4" text-anchor="middle" fill="#333" font-family="Liberation Sans">Vertical Container</text><path d="M377,943 H439 V1005 H377 Z M385,943 V1005" fill="none" stroke="#3a3a3a" stroke-width="2.9" stroke-linejoin="miter" /><path d="M43,1028 H111.5 V1088.5 H43 Z M43,1043 H111.5" fill="none" stroke="#3a3a3a" stroke-width="2.9" stroke-linejoin="miter" /><g font-family="Liberation Sans" fill="#333" font-size="6"><text x="77" y="1038" text-anchor="middle">List</text><text x="46" y="1052">Item 1</text><text x="46" y="1066.5">Item 2</text><text x="46" y="1081">Item 3</text></g><text x="129.6" y="1062" font-size="10.5" fill="#333" font-family="Liberation Sans">List Item</text><path d="M213,1090 C250,1090 260,1083 252,1072 C240,1057 226,1045 233,1036 C238,1030 250,1031 263,1031" fill="none" stroke="#3a3a3a" stroke-width="3" stroke-linejoin="miter" /><path d="M259,1024 L274,1031.5 L262,1038 Z" fill="#3a3a3a" stroke="#3a3a3a" stroke-width="2"/><path d="M294.5,1090 L298,1073 L302.5,1078 L347,1033.5 L342,1029 L358,1026.5 L355,1043 L350.5,1038 L306,1082.5 L311,1087 Z" fill="none" stroke="#3a3a3a" stroke-width="2.8" stroke-linejoin="miter" /><path d="M375.5,1081 L383.5,1090 L422.5,1051 L431,1059.5 L440.5,1026.5 L409,1034 L415.5,1043 Z" fill="none" stroke="#3a3a3a" stroke-width="3" stroke-linejoin="miter" /><line x1="46" y1="1173" x2="107" y2="1112" stroke="#3a3a3a" stroke-width="3.3" stroke-dasharray="4 4"/><line x1="129" y1="1172" x2="186" y2="1115" stroke="#3a3a3a" stroke-width="3" stroke-dasharray="2.5 6"/><line x1="210" y1="1172" x2="272" y2="1111" stroke="#3a3a3a" stroke-width="3"/><line x1="306" y1="1161" x2="344" y2="1123" stroke="#3a3a3a" stroke-width="3"/><path d="M300,1167 L304,1152 L315,1163 Z M350,1117 L346,1132 L335,1121 Z" fill="#3a3a3a"/><line x1="383" y1="1166" x2="426" y2="1123" stroke="#3a3a3a" stroke-width="3"/><path d="M433,1117 L429,1132 L418,1121 Z" fill="#3a3a3a"/><rect x="44" y="1223.5" width="67.5" height="5.5" fill="#3a3a3a"/><g stroke="#3a3a3a" stroke-width="3"><line x1="131" y1="1226" x2="152" y2="1226"/><line x1="170" y1="1226" x2="184" y2="1226"/></g><path d="M176,1218 L191,1226 L176,1234 Z" fill="#3a3a3a"/><text x="161" y="1229.5" font-size="7" text-anchor="middle" fill="#333" font-family="Liberation Sans">Label</text><g stroke="#3a3a3a" stroke-width="3"><line x1="224" y1="1227" x2="236" y2="1227"/><line x1="250" y1="1227" x2="268" y2="1227"/></g><line x1="210" y1="1225.5" x2="224" y2="1225.5" stroke="#3a3a3a" stroke-width="1"/><path d="M260,1219 L275,1227 L260,1235 Z" fill="#3a3a3a"/><text x="210" y="1224" font-size="5" fill="#333" font-family="Liberation Sans">Source</text><text x="243" y="1229" font-size="5" text-anchor="middle" fill="#333" font-family="Liberation Sans">Label</text><g stroke="#3a3a3a" stroke-width="3"><line x1="307" y1="1227" x2="319" y2="1227"/><line x1="334" y1="1227" x2="350" y2="1227"/></g><line x1="293" y1="1225.5" x2="307" y2="1225.5" stroke="#3a3a3a" stroke-width="1"/><path d="M345,1222 L358,1227 L345,1232" fill="none" stroke="#3a3a3a" stroke-width="1.5"/><text x="293" y="1224" font-size="5" fill="#333" font-family="Liberation Sans">Source</text><text x="326" y="1229" font-size="5" text-anchor="middle" fill="#333" font-family="Liberation Sans">Label</text><text x="344" y="1223" font-size="5" fill="#333" font-family="Liberation Sans">Target</text><g stroke="#3a3a3a" stroke-width="3"><line x1="378" y1="1226" x2="398" y2="1226"/><line x1="411" y1="1226" x2="426" y2="1226"/><rect x="398" y="1220" width="13" height="11" fill="none"/></g><path d="M401,1223 L404.5,1226.5 L408,1223" fill="none" stroke="#3a3a3a" stroke-width="1.5"/><path d="M423,1218 L438,1226 L423,1234 Z" fill="#3a3a3a"/></svg>
<svg style="left:38px;top:1310px" width="18" height="24"><path d="M3.5 3 L14 12 L3.5 21 Z" fill="#3a3a3a"/></svg>
<div class="t" style="left:70.0px;top:1306.7px;font-size:31.1px;color:#3a3a3a;font-weight:normal;">Misc</div>
<div class="b" style="left:116.0px;top:1391.0px;width:290.0px;height:68.5px;background:#c3e5fc;border-radius:9px;"></div>
<svg style="left:140px;top:1410px" width="34" height="36"><path d="M16.8 6 V31 M5.5 18.5 H28" stroke="#3a3a3a" stroke-width="5"/></svg>
<div class="t bd" style="left:182.0px;top:1412.3px;font-size:31.5px;color:#3a3a3a;font-weight:bold;">More Shapes</div>
<div class="b" style="left:2892.0px;top:178.0px;width:368.0px;height:80.5px;background:#e5e6e8;border-bottom:2px solid #d3d4d7;"></div>
<div class="b" style="left:2891.0px;top:178.0px;width:2.0px;height:80.5px;background:#d3d4d7;"></div>
<div class="b" style="left:3076.0px;top:178.0px;width:2.0px;height:80.5px;background:#d3d4d7;"></div>
<div class="t" style="left:2766.0px;top:201.8px;font-size:31px;color:#3a3a3a;font-weight:normal;-webkit-text-stroke:0.35px currentColor;">Style</div>
<div class="t" style="left:2957.0px;top:201.8px;font-size:31px;color:#3a3a3a;font-weight:normal;-webkit-text-stroke:0.35px currentColor;">Text</div>
<div class="t" style="left:3113.5px;top:201.8px;font-size:31px;color:#3a3a3a;font-weight:normal;-webkit-text-stroke:0.35px currentColor;">Arrange</div>
<div class="b" style="left:2797.0px;top:304.0px;width:83.0px;height:54.6px;background:#ffffff;border:2.4px solid #000000;"></div>
<div class="b" style="left:2894.0px;top:304.0px;width:83.0px;height:54.6px;background:#f5f5f5;border:2.4px solid #666666;"></div>
<div class="b" style="left:2991.0px;top:304.0px;width:83.0px;height:54.6px;background:#dae8fc;border:2.4px solid #6c8ebf;"></div>
<div class="b" style="left:3087.0px;top:304.0px;width:83.0px;height:54.6px;background:#d5e8d4;border:2.4px solid #82b366;"></div>
<div class="b" style="left:2797.0px;top:373.4px;width:83.0px;height:54.6px;background:#ffe6cc;border:2.4px solid #d79b00;"></div>
<div class="b" style="left:2894.0px;top:373.4px;width:83.0px;height:54.6px;background:#fff2cc;border:2.4px solid #d6b656;"></div>
<div class="b" style="left:2991.0px;top:373.4px;width:83.0px;height:54.6px;background:#f8cecc;border:2.4px solid #b85450;"></div>
<div class="b" style="left:3087.0px;top:373.4px;width:83.0px;height:54.6px;background:#e1d5e7;border:2.4px solid #9673a6;"></div>
<svg style="left:2755px;top:345px" width="24" height="30"><path d="M18 4 L7.5 14.5 L18 25" fill="none" stroke="#4a4a4a" stroke-width="3.4"/></svg>
<svg style="left:3184px;top:345px" width="24" height="30"><path d="M6 4 L16.5 14.5 L6 25" fill="none" stroke="#4a4a4a" stroke-width="3.4"/></svg>
<div class="b" style="left:2888.1px;top:451.0px;width:17.0px;height:17.0px;background:#80d4ff;border:2px solid #b8b8b8;border-radius:5px;"></div>
<div class="b" style="left:2922.3px;top:451.0px;width:17.0px;height:17.0px;background:transparent;border:2px solid #b8b8b8;border-radius:5px;"></div>
<div class="b" style="left:2956.3px;top:451.0px;width:17.0px;height:17.0px;background:transparent;border:2px solid #b8b8b8;border-radius:5px;"></div>
<div class="b" style="left:2990.0px;top:451.0px;width:17.0px;height:17.0px;background:transparent;border:2px solid #b8b8b8;border-radius:5px;"></div>
<div class="b" style="left:3023.4px;top:451.0px;width:17.0px;height:17.0px;background:transparent;border:2px solid #b8b8b8;border-radius:5px;"></div>
<div class="b" style="left:3057.3px;top:451.0px;width:17.0px;height:17.0px;background:transparent;border:2px solid #b8b8b8;border-radius:5px;"></div>
<div class="b" style="left:2742.0px;top:516.0px;width:27.0px;height:27.0px;background:#1f7cf2;border-radius:6px;"></div><svg style="left:2742px;top:516px" width="27" height="27" viewBox="0 0 27 27"><path d="M6.5 13.5 L11.5 19 L20.5 7.5" fill="none" stroke="#fff" stroke-width="3.2" stroke-linecap="round" stroke-linejoin="round"/></svg>
<div class="t bd" style="left:2782.5px;top:514.1px;font-size:27.5px;color:#3a3a3a;font-weight:bold;">Fill</div>
<div class="b" style="left:2742.0px;top:571.0px;width:27.0px;height:27.0px;background:#fff;border:1.5px solid #cfcfcf;border-radius:6px;"></div>
<div class="t bd" style="left:2782.5px;top:569.2px;font-size:27.5px;color:#3a3a3a;font-weight:bold;">Gradient</div>
<div class="b" style="left:2742.0px;top:645.5px;width:27.0px;height:27.0px;background:#1f7cf2;border-radius:6px;"></div><svg style="left:2742px;top:645.5px" width="27" height="27" viewBox="0 0 27 27"><path d="M6.5 13.5 L11.5 19 L20.5 7.5" fill="none" stroke="#fff" stroke-width="3.2" stroke-linecap="round" stroke-linejoin="round"/></svg>
<div class="t bd" style="left:2782.5px;top:643.3px;font-size:27.5px;color:#3a3a3a;font-weight:bold;">Line</div>
<div class="b" style="left:2917.7px;top:504.0px;width:196.6px;height:48.5px;border:2px solid #d6d7d9;border-radius:10px;"></div>
<div class="t" style="left:2937.7px;top:513.2px;font-size:26.5px;color:#3a3a3a;font-weight:normal;">Auto</div>
<svg style="left:3082px;top:516px" width="20" height="24"><path d="M3.5 9 L10 2.5 L16.5 9 M3.5 15 L10 21.5 L16.5 15" fill="none" stroke="#333" stroke-width="2.6"/></svg>
<div class="b" style="left:3124.9px;top:504.0px;width:103.5px;height:48.5px;border:2px solid #d6d7d9;border-radius:10px;"></div><div class="b" style="left:3133.6px;top:512.8px;width:51.0px;height:30.5px;background:#dae8fc;border:2px solid #e2e2e2;"></div><svg style="left:3190px;top:513.25px" width="30" height="30"><path d="M3 27 L3 22.5 L20 5.5 L24.5 10 L7.5 27 Z" fill="none" stroke="#333" stroke-width="2.2"/><path d="M16.5 4.5 L25.5 13.5 M21 3 L24.5 0.5 L29.5 5.5 L27 9" fill="none" stroke="#333" stroke-width="2.2"/></svg>
<div class="b" style="left:3124.9px;top:633.0px;width:103.5px;height:47.7px;border:2px solid #d6d7d9;border-radius:10px;"></div><div class="b" style="left:3133.6px;top:641.8px;width:51.0px;height:29.7px;background:#4b6490;border:2px solid #e2e2e2;"></div><svg style="left:3190px;top:641.85px" width="30" height="30"><path d="M3 27 L3 22.5 L20 5.5 L24.5 10 L7.5 27 Z" fill="none" stroke="#333" stroke-width="2.2"/><path d="M16.5 4.5 L25.5 13.5 M21 3 L24.5 0.5 L29.5 5.5 L27 9" fill="none" stroke="#333" stroke-width="2.2"/></svg>
<div class="b" style="left:2748.0px;top:690.0px;width:324.0px;height:49.3px;border:2px solid #d6d7d9;border-radius:10px;"></div>
<div class="b" style="left:2779.0px;top:714.4px;width:230.0px;height:2.2px;background:#222;"></div>
<svg style="left:3036px;top:702px" width="28" height="24"><path d="M4.5 5.5 L14 15 L23.5 5.5" fill="none" stroke="#333" stroke-width="2.6"/></svg>
<div class="b" style="left:3084.5px;top:690.8px;width:115.8px;height:47.8px;background:#fff;border:2px solid #d6d7d9;border-radius:10px;"></div><div class="t" style="left:1194.4px;width:2000px;text-align:right;top:701.0px;font-size:28px;color:#3a3a3a;font-weight:normal;">1 pt</div><div class="b" style="left:3202.8px;top:689.8px;width:25.6px;height:49.8px;border:2px solid #d6d7d9;border-radius:9px;"></div><svg style="left:3203px;top:690.8px" width="26" height="47.80000000000007"><path d="M6.5 15.900000000000091 L13 7.900000000000091 L19.5 15.900000000000091 Z M6.5 31.90000000000009 L13 39.90000000000009 L19.5 31.90000000000009 Z" fill="#333"/></svg>
<div class="t" style="left:2744.0px;top:757.7px;font-size:28px;color:#3a3a3a;font-weight:normal;">Perimeter</div>
<div class="b" style="left:3084.5px;top:748.8px;width:115.8px;height:46.7px;background:#fff;border:2px solid #d6d7d9;border-radius:10px;"></div><div class="t" style="left:1194.4px;width:2000px;text-align:right;top:758.4px;font-size:28px;color:#3a3a3a;font-weight:normal;">0 pt</div><div class="b" style="left:3202.8px;top:747.8px;width:25.6px;height:48.7px;border:2px solid #d6d7d9;border-radius:9px;"></div><svg style="left:3203px;top:748.8px" width="26" height="46.700000000000045"><path d="M6.5 15.350000000000023 L13 7.350000000000023 L19.5 15.350000000000023 Z M6.5 31.350000000000023 L13 39.35000000000002 L19.5 31.350000000000023 Z" fill="#333"/></svg>
<div class="t bd" style="left:2744.0px;top:826.6px;font-size:27.5px;color:#3a3a3a;font-weight:bold;">Opacity</div>
<div class="b" style="left:3084.5px;top:820.0px;width:115.8px;height:40.4px;background:#fff;border:2px solid #d6d7d9;border-radius:10px;"></div><div class="t" style="left:3089.7px;top:826.5px;font-size:28px;color:#3a3a3a;font-weight:normal;">100 %</div><div class="b" style="left:3202.8px;top:819.0px;width:25.6px;height:42.4px;border:2px solid #d6d7d9;border-radius:9px;"></div><svg style="left:3203px;top:820px" width="26" height="40.39999999999998"><path d="M6.5 12.200000000000045 L13 4.2000000000000455 L19.5 12.200000000000045 Z M6.5 28.200000000000045 L13 36.200000000000045 L19.5 28.200000000000045 Z" fill="#333"/></svg>
<div class="b" style="left:2742.0px;top:889.0px;width:27.0px;height:27.0px;background:#fff;border:1.5px solid #cfcfcf;border-radius:6px;"></div>
<div class="t bd" style="left:2782.5px;top:886.3px;font-size:27.5px;color:#3a3a3a;font-weight:bold;">Sketch</div>
<div class="b" style="left:3004.8px;top:889.0px;width:27.0px;height:27.0px;background:#f4f4f4;border:1.5px solid #e6e6e6;border-radius:6px;"></div>
<div class="t bd" style="left:3045.0px;top:886.3px;font-size:27.5px;color:#8f8f8f;font-weight:bold;">Shadow</div>
<div class="b" style="left:2742.0px;top:947.7px;width:486.9px;height:47.8px;border:2px solid #d6d7d9;border-radius:10px;"></div>
<div class="t" style="left:2763.0px;top:957.0px;font-size:26.7px;color:#3a3a3a;font-weight:normal;">Edit...</div>
<svg style="left:3197px;top:960px" width="20" height="24"><path d="M3.5 9 L10 2.5 L16.5 9 M3.5 15 L10 21.5 L16.5 15" fill="none" stroke="#333" stroke-width="2.6"/></svg>
<div class="b" style="left:2742.0px;top:1002.8px;width:486.9px;height:47.8px;border:2px solid #d6d7d9;border-radius:10px;"></div>
<div class="t" style="left:1986.0px;width:2000px;text-align:center;top:1012.6px;font-size:26.9px;color:#3a3a3a;font-weight:normal;">Copy Style</div>
<div class="b" style="left:2742.0px;top:1058.0px;width:486.9px;height:48.9px;border:2px solid #d6d7d9;border-radius:10px;"></div>
<div class="t" style="left:1986.0px;width:2000px;text-align:center;top:1068.2px;font-size:26.3px;color:#3a3a3a;font-weight:normal;">Set as Default Style</div>
<div class="b" style="left:2742.0px;top:1131.4px;width:487.0px;height:54.6px;background:#e4e5e7;border-bottom:2px solid #d3d4d7;"></div>
<div class="b" style="left:2985.0px;top:1131.4px;width:2.0px;height:54.6px;background:#d3d4d7;"></div>
<svg style="left:2754px;top:1146px" width="18" height="26"><path d="M3.5 3.5 L14 12.5 L3.5 21.5 Z" fill="#111"/></svg>
<div class="t bd" style="left:2781.5px;top:1143.5px;font-size:29px;color:#111;font-weight:bold;">Property</div>
<div class="t bd" style="left:2996.8px;top:1143.5px;font-size:29px;color:#111;font-weight:bold;">Value</div>
<div class="b" style="left:502.6px;top:1034.4px;width:414.8px;height:414.8px;background:#f1f2f4;border:2px solid #c4c5c8;border-radius:11px;box-shadow:0 1px 4px rgba(0,0,0,0.12);"></div>
<div class="b" style="left:504.6px;top:1105.0px;width:410.8px;height:342.2px;background:#fff;border-radius:0 0 9px 9px;border-top:2px solid #d3d4d7;"></div>
<div class="t bd" style="left:-301.3px;width:2000px;text-align:center;top:1054.5px;font-size:29.3px;color:#3a3a3a;font-weight:bold;">Outline</div>
<svg style="left:805px;top:1055.5px" width="28" height="22"><path d="M3.5 16.5 L13.5 6 L23.5 16.5" fill="none" stroke="#4a4a4a" stroke-width="3.6"/></svg><svg style="left:866px;top:1055px" width="26" height="24"><path d="M3 2.5 L22 21.5 M22 2.5 L3 21.5" stroke="#4a4a4a" stroke-width="3.8"/></svg>
<svg style="left:0;top:0" width="3260" height="1550"><g opacity="0.85"><rect x="535.72" y="1277.55" width="349.03" height="31.49" fill="none" stroke="#8c8c8c" stroke-width="1.98"/><rect x="847.51" y="1289.65" width="35.75" height="8.07" fill="#fff" stroke="#708090" stroke-width="2.20"/><path d="M543.6,1257.8 L594.9,1257.8" fill="none" stroke="#595959" stroke-width="2" stroke-dasharray="4 4"/><path d="M602.8,1257.8 L620.5,1257.8" fill="none" stroke="#595959" stroke-width="2" stroke-dasharray="4 4"/><path d="M628.4,1257.8 L659.6,1257.8" fill="none" stroke="#595959" stroke-width="2" stroke-dasharray="4 4"/><path d="M667.5,1257.8 L709.3,1257.8" fill="none" stroke="#595959" stroke-width="2" stroke-dasharray="4 4"/><path d="M717.2,1257.8 L737.0,1257.8" fill="none" stroke="#595959" stroke-width="2" stroke-dasharray="4 4"/><path d="M744.9,1257.8 L772.5,1257.8" fill="none" stroke="#595959" stroke-width="2" stroke-dasharray="4 4"/><path d="M780.4,1257.8 L817.6,1257.8" fill="none" stroke="#595959" stroke-width="2" stroke-dasharray="4 4"/><path d="M825.5,1257.8 L847.5,1257.8" fill="none" stroke="#595959" stroke-width="2" stroke-dasharray="4 4"/><path d="M543.5,1257.8 L553.1,1257.8 Q555.8,1257.8 555.8,1260.6 L555.8,1281.5" fill="none" stroke="#595959" stroke-width="2" stroke-dasharray="4 4"/><path d="M543.5,1257.8 L565.8,1257.8 Q568.5,1257.8 568.5,1260.6 L568.5,1289.3" fill="none" stroke="#595959" stroke-width="2" stroke-dasharray="4 4"/><path d="M559.8,1285.4 L575.2,1285.4" fill="none" stroke="#595959" stroke-width="2" stroke-dasharray="4 4"/><path d="M583.1,1285.4 L596.1,1285.4 Q598.9,1285.4 598.9,1282.7 L598.9,1261.8" fill="none" stroke="#595959" stroke-width="2" stroke-dasharray="4 4"/><path d="M602.8,1257.8 L604.8,1257.8 Q606.7,1257.8 606.7,1259.8 L606.7,1289.3" fill="none" stroke="#595959" stroke-width="2" stroke-dasharray="4 4"/><path d="M572.5,1293.3 L602.8,1293.3" fill="none" stroke="#595959" stroke-width="2" stroke-dasharray="4 4"/><path d="M610.7,1293.3 L621.7,1293.3 Q624.5,1293.3 624.5,1290.5 L624.5,1261.8" fill="none" stroke="#595959" stroke-width="2" stroke-dasharray="4 4"/><path d="M628.4,1257.8 L630.4,1257.8 Q632.4,1257.8 632.4,1259.8 L632.4,1281.5" fill="none" stroke="#595959" stroke-width="2" stroke-dasharray="4 4"/><path d="M628.4,1257.8 L641.5,1257.8 Q644.3,1257.8 644.3,1260.6 L644.3,1265.7" fill="none" stroke="#595959" stroke-width="2" stroke-dasharray="4 4"/><path d="M648.2,1269.6 L655.4,1269.6 Q658.1,1269.6 658.1,1266.9 L658.1,1258.6 Q658.1,1257.8 658.9,1257.8 L659.6,1257.8" fill="none" stroke="#595959" stroke-width="2" stroke-dasharray="4 4"/><path d="M667.5,1257.8 L669.5,1257.8 Q671.5,1257.8 671.5,1259.8 L671.5,1281.5" fill="none" stroke="#595959" stroke-width="2" stroke-dasharray="4 4"/><path d="M667.5,1257.8 L676.7,1257.8 Q679.4,1257.8 679.4,1260.6 L679.4,1289.3" fill="none" stroke="#595959" stroke-width="2" stroke-dasharray="4 4"/><path d="M667.5,1257.8 L692.9,1257.8 Q695.6,1257.8 695.6,1260.6 L695.6,1297.3" fill="none" stroke="#595959" stroke-width="2" stroke-dasharray="4 4"/><path d="M636.3,1285.4 L701.5,1285.4" fill="none" stroke="#595959" stroke-width="2" stroke-dasharray="4 4"/><path d="M709.4,1285.4 L711.4,1285.4 Q713.3,1285.4 713.3,1283.5 L713.3,1261.8" fill="none" stroke="#595959" stroke-width="2" stroke-dasharray="4 4"/><path d="M717.2,1257.8 L719.2,1257.8 Q721.2,1257.8 721.2,1259.8 L721.2,1289.3" fill="none" stroke="#595959" stroke-width="2" stroke-dasharray="4 4"/><path d="M683.4,1293.3 L717.2,1293.3" fill="none" stroke="#595959" stroke-width="2" stroke-dasharray="4 4"/><path d="M725.1,1293.3 L738.2,1293.3 Q741.0,1293.3 741.0,1290.5 L741.0,1261.8" fill="none" stroke="#595959" stroke-width="2" stroke-dasharray="4 4"/><path d="M717.2,1257.8 L726.4,1257.8 Q729.1,1257.8 729.1,1260.6 L729.1,1297.3" fill="none" stroke="#595959" stroke-width="2" stroke-dasharray="4 4"/><path d="M699.6,1301.2 L760.8,1301.2" fill="none" stroke="#595959" stroke-width="2" stroke-dasharray="4 4"/><path d="M744.9,1257.8 L746.3,1257.8 Q747.7,1257.8 747.7,1259.2 L747.7,1297.3" fill="none" stroke="#595959" stroke-width="2" stroke-dasharray="4 4"/><path d="M768.7,1301.2 L773.7,1301.2 Q776.5,1301.2 776.5,1298.5 L776.5,1261.8" fill="none" stroke="#595959" stroke-width="2" stroke-dasharray="4 4"/><path d="M780.4,1257.8 L785.6,1257.8 Q788.4,1257.8 788.4,1260.6 L788.4,1265.7" fill="none" stroke="#595959" stroke-width="2" stroke-dasharray="4 4"/><path d="M792.3,1269.6 L803.3,1269.6" fill="none" stroke="#595959" stroke-width="2" stroke-dasharray="4 4"/><path d="M811.2,1269.6 L818.8,1269.6 Q821.5,1269.6 821.5,1266.9 L821.5,1261.8" fill="none" stroke="#595959" stroke-width="2" stroke-dasharray="4 4"/><circle cx="539.69" cy="1257.82" r="3.95" fill="#dae8fc" stroke="#4b6590" stroke-width="2.2"/><circle cx="598.88" cy="1257.82" r="3.95" fill="#dae8fc" stroke="#4b6590" stroke-width="2.2"/><circle cx="624.49" cy="1257.82" r="3.95" fill="#dae8fc" stroke="#4b6590" stroke-width="2.2"/><circle cx="663.59" cy="1257.82" r="3.95" fill="#dae8fc" stroke="#4b6590" stroke-width="2.2"/><circle cx="713.29" cy="1257.82" r="3.95" fill="#dae8fc" stroke="#4b6590" stroke-width="2.2"/><circle cx="740.99" cy="1257.82" r="3.95" fill="#dae8fc" stroke="#4b6590" stroke-width="2.2"/><circle cx="776.49" cy="1257.82" r="3.95" fill="#dae8fc" stroke="#4b6590" stroke-width="2.2"/><circle cx="821.50" cy="1257.82" r="3.95" fill="#dae8fc" stroke="#4b6590" stroke-width="2.2"/><circle cx="555.84" cy="1285.40" r="3.95" fill="#e1d5e7" stroke="#574572" stroke-width="2.2"/><circle cx="579.16" cy="1285.40" r="3.95" fill="#e1d5e7" stroke="#574572" stroke-width="2.2"/><circle cx="568.50" cy="1293.29" r="3.95" fill="#d5e8d4" stroke="#5a8d3b" stroke-width="2.2"/><circle cx="589.37" cy="1293.29" r="3.95" fill="#d5e8d4" stroke="#5a8d3b" stroke-width="2.2"/><circle cx="606.71" cy="1293.29" r="3.95" fill="#d5e8d4" stroke="#5a8d3b" stroke-width="2.2"/><circle cx="644.28" cy="1269.61" r="3.95" fill="#f8cecc" stroke="#9a3f3c" stroke-width="2.2"/><circle cx="788.38" cy="1269.61" r="3.95" fill="#f8cecc" stroke="#9a3f3c" stroke-width="2.2"/><circle cx="807.28" cy="1269.61" r="3.95" fill="#f8cecc" stroke="#9a3f3c" stroke-width="2.2"/><circle cx="632.38" cy="1285.40" r="3.95" fill="#b0e3e6" stroke="#0e7c85" stroke-width="2.2"/><circle cx="671.53" cy="1285.40" r="3.95" fill="#b0e3e6" stroke="#0e7c85" stroke-width="2.2"/><circle cx="687.65" cy="1285.40" r="3.95" fill="#b0e3e6" stroke="#0e7c85" stroke-width="2.2"/><circle cx="705.48" cy="1285.40" r="3.95" fill="#b0e3e6" stroke="#0e7c85" stroke-width="2.2"/><circle cx="679.41" cy="1293.29" r="3.95" fill="#ffe6cc" stroke="#b67a10" stroke-width="2.2"/><circle cx="721.19" cy="1293.29" r="3.95" fill="#ffe6cc" stroke="#b67a10" stroke-width="2.2"/><circle cx="695.61" cy="1301.24" r="3.95" fill="#fff2cc" stroke="#c9a94c" stroke-width="2.2"/><circle cx="713.29" cy="1301.24" r="3.95" fill="#fff2cc" stroke="#c9a94c" stroke-width="2.2"/><circle cx="729.15" cy="1301.24" r="3.95" fill="#fff2cc" stroke="#c9a94c" stroke-width="2.2"/><circle cx="747.70" cy="1301.24" r="3.95" fill="#fff2cc" stroke="#c9a94c" stroke-width="2.2"/><circle cx="764.71" cy="1301.24" r="3.95" fill="#fff2cc" stroke="#c9a94c" stroke-width="2.2"/><rect x="847.51" y="1253.78" width="35.75" height="7.98" fill="#dae8fc" stroke="#4b6590" stroke-width="2.2"/><rect x="847.51" y="1265.66" width="35.75" height="7.95" fill="#f8cecc" stroke="#9a3f3c" stroke-width="2.2"/></g></svg>
<div class="b" style="left:518.0px;top:1191.7px;width:375.4px;height:219.1px;background:rgba(0,140,230,0.14);border:6.5px solid #2cb5f0;"></div>
<div class="b" style="left:983.2px;top:958.0px;width:489.6px;height:461.2px;background:#f1f2f4;border:2px solid #c4c5c8;border-radius:11px;box-shadow:0 1px 4px rgba(0,0,0,0.12);"></div>
<div class="b" style="left:985.2px;top:1027.8px;width:485.6px;height:2.0px;background:#d3d4d7;"></div>
<div class="b" style="left:985.2px;top:1347.0px;width:485.6px;height:2.0px;background:#d3d4d7;"></div>
<div class="t bd" style="left:215.9px;width:2000px;text-align:center;top:978.0px;font-size:29.3px;color:#3a3a3a;font-weight:bold;">Tags</div>
<svg style="left:1359.8px;top:980px" width="28" height="22"><path d="M3.5 16.5 L13.5 6 L23.5 16.5" fill="none" stroke="#4a4a4a" stroke-width="3.6"/></svg><svg style="left:1420px;top:979px" width="26" height="24"><path d="M3 2.5 L22 21.5 M22 2.5 L3 21.5" stroke="#4a4a4a" stroke-width="3.8"/></svg>
<svg style="left:1002px;top:1052.1px" width="35" height="23.8" viewBox="-1 -2 35 23.8"><path d="M1.5 9.9 Q16.5 -8.91 31.5 9.9 Q16.5 28.71 1.5 9.9 Z" fill="none" stroke="#333" stroke-width="3"/><circle cx="16.5" cy="9.9" r="5.346000000000001" fill="none" stroke="#333" stroke-width="3"/></svg>
<svg style="left:1053px;top:1047.0px" width="34" height="34"><path d="M21 4 H4 V30 H30 V14" fill="none" stroke="#333" stroke-width="3"/><path d="M9.5 15 L16 22 L31.5 5" fill="none" stroke="#333" stroke-width="3"/></svg>
<div class="t" style="left:1101.0px;top:1052.0px;font-size:24.2px;color:#333;font-weight:normal;">UI</div>
<div class="b" style="left:1400.0px;top:1053.0px;width:28.0px;height:28.0px;background:#fff;border:1.5px solid #d2d2d2;border-radius:6px;"></div>
<svg style="left:1002px;top:1102.6499999999999px" width="35" height="23.8" viewBox="-1 -2 35 23.8"><path d="M1.5 9.9 Q16.5 -8.91 31.5 9.9 Q16.5 28.71 1.5 9.9 Z" fill="none" stroke="#333" stroke-width="3"/><circle cx="16.5" cy="9.9" r="5.346000000000001" fill="none" stroke="#333" stroke-width="3"/></svg>
<svg style="left:1053px;top:1097.55px" width="34" height="34"><path d="M21 4 H4 V30 H30 V14" fill="none" stroke="#333" stroke-width="3"/><path d="M9.5 15 L16 22 L31.5 5" fill="none" stroke="#333" stroke-width="3"/></svg>
<div class="t" style="left:1101.0px;top:1102.6px;font-size:24.2px;color:#333;font-weight:normal;">a-b-test</div>
<div class="b" style="left:1400.0px;top:1103.5px;width:28.0px;height:28.0px;background:#1f7cf2;border-radius:6px;"></div>
<svg style="left:1400px;top:1103.55px" width="28" height="28"><path d="M7 14 L12 19.5 L21.5 8" fill="none" stroke="#fff" stroke-width="3.4" stroke-linecap="round" stroke-linejoin="round"/></svg>
<svg style="left:1002px;top:1153.1999999999998px" width="35" height="23.8" viewBox="-1 -2 35 23.8"><path d="M1.5 9.9 Q16.5 -8.91 31.5 9.9 Q16.5 28.71 1.5 9.9 Z" fill="none" stroke="#333" stroke-width="3"/><circle cx="16.5" cy="9.9" r="5.346000000000001" fill="none" stroke="#333" stroke-width="3"/></svg>
<svg style="left:1053px;top:1148.1px" width="34" height="34"><path d="M21 4 H4 V30 H30 V14" fill="none" stroke="#333" stroke-width="3"/><path d="M9.5 15 L16 22 L31.5 5" fill="none" stroke="#333" stroke-width="3"/></svg>
<div class="t" style="left:1101.0px;top:1153.1px;font-size:24.2px;color:#333;font-weight:normal;">alpha</div>
<div class="b" style="left:1400.0px;top:1154.1px;width:28.0px;height:28.0px;background:#fff;border:1.5px solid #d2d2d2;border-radius:6px;"></div>
<svg style="left:1002px;top:1203.75px" width="35" height="23.8" viewBox="-1 -2 35 23.8"><path d="M1.5 9.9 Q16.5 -8.91 31.5 9.9 Q16.5 28.71 1.5 9.9 Z" fill="none" stroke="#333" stroke-width="3"/><circle cx="16.5" cy="9.9" r="5.346000000000001" fill="none" stroke="#333" stroke-width="3"/></svg>
<svg style="left:1053px;top:1198.65px" width="34" height="34"><path d="M21 4 H4 V30 H30 V14" fill="none" stroke="#333" stroke-width="3"/><path d="M9.5 15 L16 22 L31.5 5" fill="none" stroke="#333" stroke-width="3"/></svg>
<div class="t" style="left:1101.0px;top:1203.7px;font-size:24.2px;color:#333;font-weight:normal;">api</div>
<div class="b" style="left:1400.0px;top:1204.7px;width:28.0px;height:28.0px;background:#fff;border:1.5px solid #d2d2d2;border-radius:6px;"></div>
<svg style="left:1002px;top:1254.3px" width="35" height="23.8" viewBox="-1 -2 35 23.8"><path d="M1.5 9.9 Q16.5 -8.91 31.5 9.9 Q16.5 28.71 1.5 9.9 Z" fill="none" stroke="#333" stroke-width="3"/><circle cx="16.5" cy="9.9" r="5.346000000000001" fill="none" stroke="#333" stroke-width="3"/></svg>
<svg style="left:1053px;top:1249.2px" width="34" height="34"><path d="M21 4 H4 V30 H30 V14" fill="none" stroke="#333" stroke-width="3"/><path d="M9.5 15 L16 22 L31.5 5" fill="none" stroke="#333" stroke-width="3"/></svg>
<div class="t" style="left:1101.0px;top:1254.2px;font-size:24.2px;color:#333;font-weight:normal;">core</div>
<div class="b" style="left:1400.0px;top:1255.2px;width:28.0px;height:28.0px;background:#1f7cf2;border-radius:6px;"></div>
<svg style="left:1400px;top:1255.2px" width="28" height="28"><path d="M7 14 L12 19.5 L21.5 8" fill="none" stroke="#fff" stroke-width="3.4" stroke-linecap="round" stroke-linejoin="round"/></svg>
<svg style="left:1002px;top:1304.85px" width="35" height="23.8" viewBox="-1 -2 35 23.8"><path d="M1.5 9.9 Q16.5 -8.91 31.5 9.9 Q16.5 28.71 1.5 9.9 Z" fill="none" stroke="#333" stroke-width="3"/><circle cx="16.5" cy="9.9" r="5.346000000000001" fill="none" stroke="#333" stroke-width="3"/></svg>
<svg style="left:1053px;top:1299.75px" width="34" height="34"><path d="M21 4 H4 V30 H30 V14" fill="none" stroke="#333" stroke-width="3"/><path d="M9.5 15 L16 22 L31.5 5" fill="none" stroke="#333" stroke-width="3"/></svg>
<div class="t" style="left:1101.0px;top:1304.8px;font-size:24.2px;color:#333;font-weight:normal;">hidden</div>
<div class="b" style="left:1400.0px;top:1305.8px;width:28.0px;height:28.0px;background:#fff;border:1.5px solid #d2d2d2;border-radius:6px;"></div>
<div class="b" style="left:1456.0px;top:1036.0px;width:10.0px;height:259.0px;background:#dcdddf;border-radius:5px;"></div>
<svg style="left:1011px;top:1369.3999999999999px" width="40" height="26.8" viewBox="-1 -2 40 26.8"><path d="M1.5 11.4 Q19.0 -10.26 36.5 11.4 Q19.0 33.06 1.5 11.4 Z" fill="none" stroke="#444" stroke-width="3"/><circle cx="19.0" cy="11.4" r="6.156000000000001" fill="none" stroke="#444" stroke-width="3"/></svg>
<svg style="left:1088px;top:1369px" width="30" height="30"><path d="M15.5 2.5 V27 M3 14.5 H28" stroke="#444" stroke-width="3.4"/></svg>
<svg style="left:1151px;top:1366px" width="34" height="34"><circle cx="17" cy="17" r="14" fill="none" stroke="#444" stroke-width="2.8"/></svg>
<div class="t" style="left:168.0px;width:2000px;text-align:center;top:1374.4px;font-size:22px;color:#444;font-weight:normal;">?</div>
<div class="b" style="left:1505.2px;top:965.2px;width:489.6px;height:461.6px;background:#f1f2f4;border:2px solid #c4c5c8;border-radius:11px;box-shadow:0 1px 4px rgba(0,0,0,0.12);"></div>
<div class="b" style="left:1507.2px;top:1035.0px;width:485.6px;height:70.0px;background:#e1e8f5;border-top:2px solid #d3d4d7;border-bottom:2px solid #d3d4d7;"></div>
<div class="b" style="left:1507.2px;top:1354.0px;width:485.6px;height:2.0px;background:#d3d4d7;"></div>
<div class="t bd" style="left:738.0px;width:2000px;text-align:center;top:986.2px;font-size:29.3px;color:#3a3a3a;font-weight:bold;">Layers</div>
<svg style="left:1881.8px;top:986px" width="28" height="22"><path d="M3.5 16.5 L13.5 6 L23.5 16.5" fill="none" stroke="#4a4a4a" stroke-width="3.6"/></svg><svg style="left:1942px;top:986px" width="26" height="24"><path d="M3 2.5 L22 21.5 M22 2.5 L3 21.5" stroke="#4a4a4a" stroke-width="3.8"/></svg>
<svg style="left:1526.8px;top:1057.4px" width="34" height="23.2" viewBox="-1 -2 34 23.2"><path d="M1.5 9.6 Q16.0 -8.64 30.5 9.6 Q16.0 27.84 1.5 9.6 Z" fill="none" stroke="#111" stroke-width="3"/><circle cx="16.0" cy="9.6" r="5.184" fill="none" stroke="#111" stroke-width="3"/></svg>
<svg style="left:1579px;top:1051px" width="30" height="38"><path d="M7 17 V11 A7.5 7.5 0 0 1 22 11" fill="none" stroke="#8b8b8b" stroke-width="3"/><rect x="3.5" y="17" width="22" height="17.5" rx="2.5" fill="none" stroke="#8b8b8b" stroke-width="3"/><circle cx="14.5" cy="25.5" r="2.5" fill="#8b8b8b"/></svg>
<div class="t bd" style="left:1630.8px;top:1056.3px;font-size:24.5px;color:#2a63d4;font-weight:bold;">Background</div>
<svg style="left:1960px;top:1058px" width="20" height="20"><circle cx="10" cy="10" r="7.5" fill="#2a63d4"/></svg>
<svg style="left:1537px;top:1375px" width="30" height="30"><path d="M14.5 2 V28 M2 15 H27" stroke="#4a4a4a" stroke-width="3.2"/></svg>
<svg style="left:1607px;top:1372px" width="36" height="36"><path d="M18 3 L32 14 L18 25 L4 14 Z" fill="none" stroke="#4a4a4a" stroke-width="3"/><path d="M4 21 L18 32 L32 21" fill="none" stroke="#4a4a4a" stroke-width="3"/></svg>
<svg style="left:1681px;top:1372px" width="36" height="36"><path d="M3.5 33 L3.5 27 L24 6.5 A3 3 0 0 1 28.5 6.5 L30 8 A3 3 0 0 1 30 12.5 L9.5 33 Z" fill="none" stroke="#4a4a4a" stroke-width="3.2" stroke-linejoin="round"/><path d="M21 9.5 L27 15.5" stroke="#4a4a4a" stroke-width="3"/></svg>
<svg style="left:1755px;top:1371px" width="34" height="38"><rect x="10.5" y="3" width="18" height="24" rx="1.5" fill="none" stroke="#4a4a4a" stroke-width="3.2"/><path d="M3.5 10 V34.5 H22" fill="none" stroke="#4a4a4a" stroke-width="3.2"/></svg>
<svg style="left:1831px;top:1371px" width="32" height="38"><path d="M2 6 H30" stroke="#4a4a4a" stroke-width="3"/><path d="M11 5.5 V2.5 H21 V5.5" fill="none" stroke="#4a4a4a" stroke-width="2.6"/><path d="M5.5 7 V33.5 H26.5 V7" fill="none" stroke="#4a4a4a" stroke-width="3.2"/><path d="M12.5 11 V28 M19.5 11 V28" stroke="#4a4a4a" stroke-width="3"/></svg>
<div class="b" style="left:2054.7px;top:762.4px;width:692.3px;height:663.6px;background:#f1f2f4;border:2px solid #c4c5c8;border-radius:11px;box-shadow:0 1px 4px rgba(0,0,0,0.12);"></div>
<div class="b" style="left:2056.7px;top:832.3px;width:688.3px;height:2.0px;background:#d3d4d7;"></div>
<div class="t bd" style="left:1388.9px;width:2000px;text-align:center;top:784.7px;font-size:29.7px;color:#3a3a3a;font-weight:bold;">Find/Replace</div>
<svg style="left:2634px;top:784.5px" width="28" height="22"><path d="M3.5 16.5 L13.5 6 L23.5 16.5" fill="none" stroke="#4a4a4a" stroke-width="3.6"/></svg><svg style="left:2693.7px;top:784px" width="26" height="24"><path d="M3 2.5 L22 21.5 M22 2.5 L3 21.5" stroke="#4a4a4a" stroke-width="3.8"/></svg>
<div class="b" style="left:2073.6px;top:860.4px;width:640.7px;height:75.1px;background:#fff;border:6px solid #7eabf6;border-radius:13px;box-shadow:inset 0 0 0 1px #cfd8e6;"></div>
<div class="t" style="left:2095.5px;top:884.5px;font-size:27.4px;color:#222;font-weight:normal;">1.4</div>
<div class="b" style="left:2131.5px;top:882.0px;width:3.0px;height:30.6px;background:#111;"></div>
<div class="b" style="left:2079.8px;top:954.0px;width:627.0px;height:62.0px;background:#fff;border:2px solid #d9dadc;border-radius:10px;"></div>
<div class="t" style="left:2095.5px;top:971.3px;font-size:28px;color:#aaaaaa;font-weight:normal;">Replace with</div>
<div class="b" style="left:2083.0px;top:1043.0px;width:27.0px;height:26.0px;background:#fff;border:1.5px solid #d2d2d2;border-radius:6px;"></div>
<div class="t" style="left:2119.0px;top:1041.4px;font-size:24.3px;color:#333;font-weight:normal;">Regular Expression</div>
<svg style="left:2349px;top:1033px" width="32" height="32"><circle cx="16" cy="16" r="13.5" fill="none" stroke="#333" stroke-width="2.6"/></svg>
<div class="t" style="left:1365.0px;width:2000px;text-align:center;top:1039.7px;font-size:21px;color:#333;font-weight:normal;">?</div>
<div class="b" style="left:2083.0px;top:1083.0px;width:27.0px;height:26.0px;background:#fff;border:1.5px solid #d2d2d2;border-radius:6px;"></div>
<div class="t" style="left:2119.0px;top:1080.4px;font-size:24.3px;color:#333;font-weight:normal;">All Pages</div>
<div class="b" style="left:2125.2px;top:1142.4px;width:275.3px;height:68.4px;background:#c3e5fc;border-radius:11px;"></div>
<div class="b" style="left:2419.3px;top:1142.4px;width:275.3px;height:68.4px;background:#c3e5fc;border-radius:11px;"></div>
<div class="t bd" style="left:1262.8px;width:2000px;text-align:center;top:1164.1px;font-size:30.6px;color:#3a3a3a;font-weight:bold;">Find</div>
<div class="t bd" style="left:1557.0px;width:2000px;text-align:center;top:1164.1px;font-size:30.6px;color:#3a3a3a;font-weight:bold;">Replace/Find</div>
<div class="b" style="left:2125.2px;top:1225.6px;width:275.3px;height:67.7px;background:#c3e5fc;border-radius:11px;"></div>
<div class="b" style="left:2419.3px;top:1225.6px;width:275.3px;height:67.7px;background:#c3e5fc;border-radius:11px;"></div>
<div class="t bd" style="left:1262.8px;width:2000px;text-align:center;top:1246.4px;font-size:30.6px;color:#3a3a3a;font-weight:bold;">Replace</div>
<div class="t bd" style="left:1557.0px;width:2000px;text-align:center;top:1246.4px;font-size:30.6px;color:#3a3a3a;font-weight:bold;">Replace All</div>
<div class="b" style="left:2125.2px;top:1308.7px;width:275.3px;height:67.0px;border:2px solid #d4d5d7;border-radius:11px;"></div>
<div class="b" style="left:2419.3px;top:1308.7px;width:275.3px;height:67.0px;border:2px solid #d4d5d7;border-radius:11px;"></div>
<div class="t bd" style="left:1262.8px;width:2000px;text-align:center;top:1328.9px;font-size:30.6px;color:#3a3a3a;font-weight:bold;">Reset</div>
<div class="t bd" style="left:1557.0px;width:2000px;text-align:center;top:1328.9px;font-size:30.6px;color:#3a3a3a;font-weight:bold;">Close</div>
<div class="b" style="left:42.5px;top:170.0px;width:552.5px;height:506.0px;background:#f1f2f4;border:1.5px solid #d5d6d8;border-radius:10px;box-shadow:0 3px 8px rgba(0,0,0,0.18);"></div>
<div class="t" style="left:120.0px;top:190.6px;font-size:31.8px;color:#3a3a3a;font-weight:normal;">Shapes</div>
<svg style="left:70.5px;top:193.5px" width="32" height="30"><path d="M3.5 14.5 L11.5 24.5 L28.5 3" fill="none" stroke="#111" stroke-width="5" stroke-linejoin="miter"/></svg>
<svg style="left:453.75px;top:194.0px" width="26" height="24" viewBox="0 0 26 24"><path d="M8.5 8.5 H17.5 V15.5 H8.5 Z M8.5 8.5 V5.5 A3.5 3.5 0 1 0 5 9 H8.5 M17.5 8.5 V5.5 A3.5 3.5 0 1 1 21 9 H17.5 M8.5 15.5 V18.5 A3.5 3.5 0 1 1 5 15 H8.5 M17.5 15.5 V18.5 A3.5 3.5 0 1 0 21 15 H17.5" fill="none" stroke="#808080" stroke-width="3"/></svg><div class="t" style="left:483.8px;top:190.6px;font-size:31.8px;color:#808080;font-weight:normal;">+</div><svg style="left:503.35px;top:191.5px" width="28" height="27" viewBox="0 0 28 27"><path d="M14 2 L26 14 H19.5 V25 H8.5 V14 H2 Z" fill="none" stroke="#808080" stroke-width="2.6" stroke-linejoin="round"/></svg><div class="t" style="left:533.4px;top:190.6px;font-size:31.8px;color:#808080;font-weight:normal;">+</div><div class="t" style="left:552.0px;top:190.6px;font-size:31.8px;color:#808080;font-weight:normal;">K</div>
<div class="t" style="left:120.0px;top:248.3px;font-size:31.8px;color:#3a3a3a;font-weight:normal;">Format</div>
<svg style="left:70.5px;top:251.2px" width="32" height="30"><path d="M3.5 14.5 L11.5 24.5 L28.5 3" fill="none" stroke="#111" stroke-width="5" stroke-linejoin="miter"/></svg>
<svg style="left:453.75px;top:251.7px" width="26" height="24" viewBox="0 0 26 24"><path d="M8.5 8.5 H17.5 V15.5 H8.5 Z M8.5 8.5 V5.5 A3.5 3.5 0 1 0 5 9 H8.5 M17.5 8.5 V5.5 A3.5 3.5 0 1 1 21 9 H17.5 M8.5 15.5 V18.5 A3.5 3.5 0 1 1 5 15 H8.5 M17.5 15.5 V18.5 A3.5 3.5 0 1 0 21 15 H17.5" fill="none" stroke="#808080" stroke-width="3"/></svg><div class="t" style="left:483.8px;top:248.3px;font-size:31.8px;color:#808080;font-weight:normal;">+</div><svg style="left:503.35px;top:249.2px" width="28" height="27" viewBox="0 0 28 27"><path d="M14 2 L26 14 H19.5 V25 H8.5 V14 H2 Z" fill="none" stroke="#808080" stroke-width="2.6" stroke-linejoin="round"/></svg><div class="t" style="left:533.4px;top:248.3px;font-size:31.8px;color:#808080;font-weight:normal;">+</div><div class="t" style="left:552.0px;top:248.3px;font-size:31.8px;color:#808080;font-weight:normal;">P</div>
<div class="t" style="left:120.0px;top:306.0px;font-size:31.8px;color:#3a3a3a;font-weight:normal;">Ruler</div>
<svg style="left:70.5px;top:308.9px" width="32" height="30"><path d="M3.5 14.5 L11.5 24.5 L28.5 3" fill="none" stroke="#111" stroke-width="5" stroke-linejoin="miter"/></svg>
<div class="t" style="left:120.0px;top:378.1px;font-size:31.8px;color:#3a3a3a;font-weight:normal;">Find/Replace</div>
<svg style="left:506px;top:381.5px" width="26" height="24" viewBox="0 0 26 24"><path d="M8.5 8.5 H17.5 V15.5 H8.5 Z M8.5 8.5 V5.5 A3.5 3.5 0 1 0 5 9 H8.5 M17.5 8.5 V5.5 A3.5 3.5 0 1 1 21 9 H17.5 M8.5 15.5 V18.5 A3.5 3.5 0 1 1 5 15 H8.5 M17.5 15.5 V18.5 A3.5 3.5 0 1 0 21 15 H17.5" fill="none" stroke="#808080" stroke-width="3"/></svg><div class="t" style="left:536.0px;top:378.1px;font-size:31.8px;color:#808080;font-weight:normal;">+</div><div class="t" style="left:554.6px;top:378.1px;font-size:31.8px;color:#808080;font-weight:normal;">F</div>
<div class="t" style="left:120.0px;top:436.3px;font-size:31.8px;color:#3a3a3a;font-weight:normal;">Layers</div>
<svg style="left:70.5px;top:439.2px" width="32" height="30"><path d="M3.5 14.5 L11.5 24.5 L28.5 3" fill="none" stroke="#111" stroke-width="5" stroke-linejoin="miter"/></svg>
<svg style="left:457px;top:439.7px" width="26" height="24" viewBox="0 0 26 24"><path d="M8.5 8.5 H17.5 V15.5 H8.5 Z M8.5 8.5 V5.5 A3.5 3.5 0 1 0 5 9 H8.5 M17.5 8.5 V5.5 A3.5 3.5 0 1 1 21 9 H17.5 M8.5 15.5 V18.5 A3.5 3.5 0 1 1 5 15 H8.5 M17.5 15.5 V18.5 A3.5 3.5 0 1 0 21 15 H17.5" fill="none" stroke="#808080" stroke-width="3"/></svg><div class="t" style="left:487.0px;top:436.3px;font-size:31.8px;color:#808080;font-weight:normal;">+</div><svg style="left:506.6px;top:437.2px" width="28" height="27" viewBox="0 0 28 27"><path d="M14 2 L26 14 H19.5 V25 H8.5 V14 H2 Z" fill="none" stroke="#808080" stroke-width="2.6" stroke-linejoin="round"/></svg><div class="t" style="left:536.6px;top:436.3px;font-size:31.8px;color:#808080;font-weight:normal;">+</div><div class="t" style="left:555.2px;top:436.3px;font-size:31.8px;color:#808080;font-weight:normal;">L</div>
<div class="t" style="left:120.0px;top:494.1px;font-size:31.8px;color:#3a3a3a;font-weight:normal;">Tags</div>
<svg style="left:70.5px;top:497px" width="32" height="30"><path d="M3.5 14.5 L11.5 24.5 L28.5 3" fill="none" stroke="#111" stroke-width="5" stroke-linejoin="miter"/></svg>
<svg style="left:505px;top:497.5px" width="26" height="24" viewBox="0 0 26 24"><path d="M8.5 8.5 H17.5 V15.5 H8.5 Z M8.5 8.5 V5.5 A3.5 3.5 0 1 0 5 9 H8.5 M17.5 8.5 V5.5 A3.5 3.5 0 1 1 21 9 H17.5 M8.5 15.5 V18.5 A3.5 3.5 0 1 1 5 15 H8.5 M17.5 15.5 V18.5 A3.5 3.5 0 1 0 21 15 H17.5" fill="none" stroke="#808080" stroke-width="3"/></svg><div class="t" style="left:535.0px;top:494.1px;font-size:31.8px;color:#808080;font-weight:normal;">+</div><div class="t" style="left:553.6px;top:494.1px;font-size:31.8px;color:#808080;font-weight:normal;">K</div>
<div class="t" style="left:120.0px;top:551.9px;font-size:31.8px;color:#3a3a3a;font-weight:normal;">Outline</div>
<svg style="left:70.5px;top:554.8px" width="32" height="30"><path d="M3.5 14.5 L11.5 24.5 L28.5 3" fill="none" stroke="#111" stroke-width="5" stroke-linejoin="miter"/></svg>
<svg style="left:450px;top:555.3px" width="26" height="24" viewBox="0 0 26 24"><path d="M8.5 8.5 H17.5 V15.5 H8.5 Z M8.5 8.5 V5.5 A3.5 3.5 0 1 0 5 9 H8.5 M17.5 8.5 V5.5 A3.5 3.5 0 1 1 21 9 H17.5 M8.5 15.5 V18.5 A3.5 3.5 0 1 1 5 15 H8.5 M17.5 15.5 V18.5 A3.5 3.5 0 1 0 21 15 H17.5" fill="none" stroke="#808080" stroke-width="3"/></svg><div class="t" style="left:480.0px;top:551.9px;font-size:31.8px;color:#808080;font-weight:normal;">+</div><svg style="left:499.6px;top:552.8px" width="28" height="27" viewBox="0 0 28 27"><path d="M14 2 L26 14 H19.5 V25 H8.5 V14 H2 Z" fill="none" stroke="#808080" stroke-width="2.6" stroke-linejoin="round"/></svg><div class="t" style="left:529.6px;top:551.9px;font-size:31.8px;color:#808080;font-weight:normal;">+</div><div class="t" style="left:548.2px;top:551.9px;font-size:31.8px;color:#808080;font-weight:normal;">O</div>
<div class="b" style="left:50.0px;top:356.0px;width:535.0px;height:2.0px;background:#d6d7d9;"></div>
<div class="b" style="left:50.0px;top:604.0px;width:535.0px;height:2.0px;background:#d6d7d9;"></div>
<div class="t" style="left:120.0px;top:624.1px;font-size:31.8px;color:#3a3a3a;font-weight:normal;">Fullscreen</div>
<div class="b" style="left:27.5px;top:91.0px;width:88.8px;height:93.0px;border:11.5px solid #fe5a4e;"></div>
<div class="b" style="left:29.5px;top:174.5px;width:566.8px;height:426.5px;border:11px solid #fe5a4e;"></div>
<svg style="left:0;top:0" width="200" height="200">
<path d="M69.5,147.5 C68.5,143.5 73,141.5 74.5,145.5 L77.5,153.5 C78.5,151.5 81.5,151.5 82.5,154 C83.5,152 86.5,152 87.5,155 C88.5,153.5 91.5,154 92,157.5 L92,163 C92,167 89.5,170.5 87,173 L75.5,173 C71,169 67,164 63.5,159.5 C61.5,157 63.5,153.5 66.5,155.5 L72,160 Z" fill="#fff" stroke="#000" stroke-width="2" stroke-linejoin="round" style="filter:drop-shadow(0 1px 1px rgba(0,0,0,0.3))"/>
<path d="M76.5,161 V167.5 M80.8,161 V167.5 M84.6,161 V167.5" stroke="#000" stroke-width="1.7"/>
</svg>
<svg style="left:53px;top:1498px" width="30" height="30"><path d="M15.5 3 V28 M3 15.5 H28" stroke="#444" stroke-width="3.4"/></svg>
<svg style="left:139px;top:1500px" width="34" height="28"><path d="M2 4.5 H32 M2 13.5 H32 M2 22.5 H32" stroke="#444" stroke-width="3.4"/></svg>
<div class="b" style="left:221.0px;top:1478.0px;width:358.0px;height:72.0px;background:#e1e7f4;"></div>
<div class="t" style="left:257.7px;top:1499.4px;font-size:30.8px;color:#1a5fd1;font-weight:normal;">feature flags in tags</div>
<svg style="left:538px;top:1504px" width="26" height="20"><path d="M4 5 L13 14 L22 5" fill="none" stroke="#1a5fd1" stroke-width="2.6"/></svg>
<div class="t" style="left:615.8px;top:1499.5px;font-size:30.7px;color:#3a3a3a;font-weight:normal;">feature flags in labels</div>
<div class="t" style="left:981.0px;top:1499.6px;font-size:30.6px;color:#3a3a3a;font-weight:normal;">feature flags in shape pr...</div>
<div class="t" style="left:1421.9px;top:1499.3px;font-size:31px;color:#3a3a3a;font-weight:normal;">feature flags in tooltips w...</div>
<svg style="left:1874px;top:1500px" width="22" height="26"><path d="M16 3.5 L6.5 13 L16 22.5" fill="none" stroke="#a0a0a0" stroke-width="3"/></svg>
<svg style="left:1962px;top:1500px" width="22" height="26"><path d="M6 3.5 L15.5 13 L6 22.5" fill="none" stroke="#444" stroke-width="3"/></svg>
<svg style="left:0;top:1520px" width="30" height="30"><path d="M0 0 L0 30 L30 30 A30 30 0 0 1 0 0 Z" fill="#00077d"/></svg>
<svg style="left:3230px;top:1520px" width="30" height="30"><path d="M30 0 L30 30 L0 30 A30 30 0 0 0 30 0 Z" fill="#d6d6d6"/></svg>
</body></html>
